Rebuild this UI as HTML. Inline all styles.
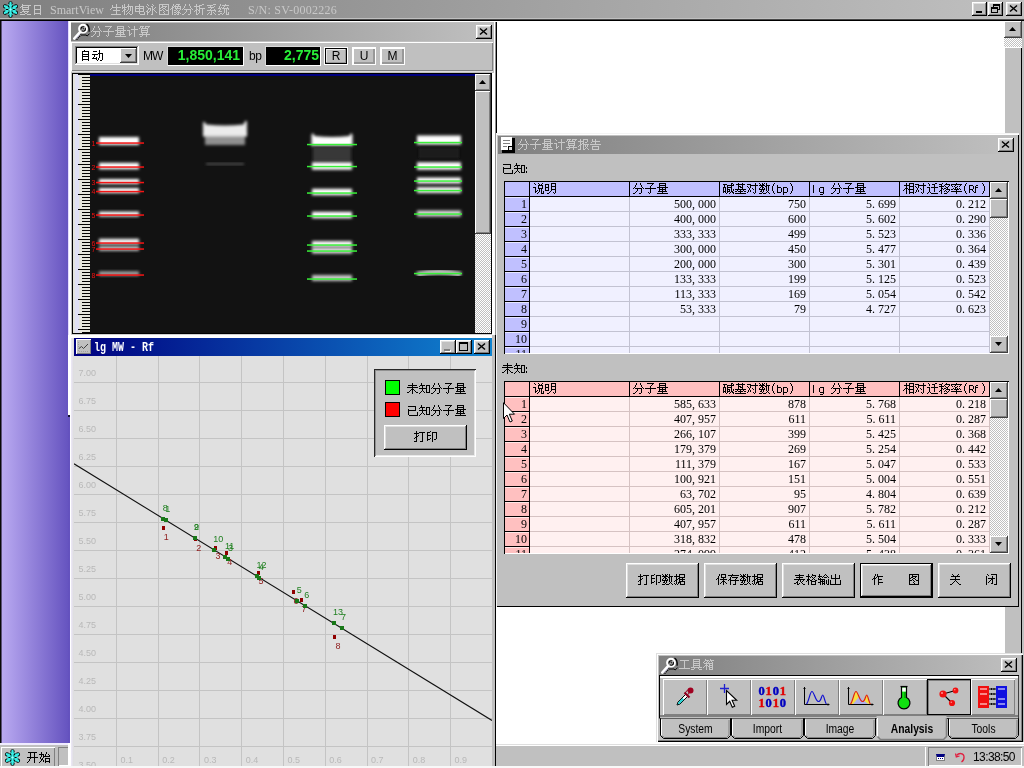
<!DOCTYPE html><html lang="zh"><head><meta charset="utf-8"><title>SmartView</title><style>
*{box-sizing:border-box;margin:0;padding:0}
html,body{width:1024px;height:768px;overflow:hidden;background:#fff;font-family:"Liberation Sans",sans-serif}
body{font-family:"Liberation Sans",sans-serif;font-size:11px;color:#000;position:relative}
#r{will-change:transform;position:absolute;left:0;top:0;width:1024px;height:768px;overflow:hidden;background:#fff}
.a{position:absolute}
svg.bt{shape-rendering:crispEdges;overflow:visible;display:block}
.gray{background:#c0c0c0}
.rb{background:#c0c0c0;box-shadow:inset -1px -1px #000,inset 1px 1px #fff,inset -2px -2px #808080,inset 2px 2px #dfdfdf}
.rb1{background:#c0c0c0;box-shadow:inset -1px -1px #404040,inset 1px 1px #fff,inset -2px -2px #808080}
.sk{box-shadow:inset -1px -1px #fff,inset 1px 1px #808080,inset -2px -2px #dfdfdf,inset 2px 2px #000}
.dith{background:conic-gradient(#fff 25%,#c0c0c0 0 50%,#fff 0 75%,#c0c0c0 0) 0 0/2px 2px}
.tb{background:linear-gradient(90deg,#808080,#c0c0c0)}
.tba{background:linear-gradient(90deg,#000080,#1084d0)}
.ser{font-family:"Liberation Serif",serif;font-size:12px}
i{font-style:normal;display:inline-block;width:6px;text-align:left}
.cell{position:absolute;height:15px;line-height:14px;text-align:right;padding-right:3px;font-family:"Liberation Serif",serif;font-size:12px;white-space:nowrap}
.lbl{position:absolute;font-size:9px;line-height:9px;white-space:nowrap}
.btn{position:absolute;background:#c0c0c0;box-shadow:inset -1px -1px #000,inset 1px 1px #fff,inset -2px -2px #808080,inset 2px 2px #dfdfdf}
</style></head><body><div id="r"><svg width="0" height="0" style="position:absolute"><defs><path id="g28" d="M3 2h1v1h-1zM2 3h1v1h-1zM2 4h1v1h-1zM1 5h1v1h-1zM1 6h1v1h-1zM1 7h1v1h-1zM1 8h1v1h-1zM1 9h1v1h-1zM2 10h1v1h-1zM2 11h1v1h-1zM3 12h1v1h-1z"/><path id="g29" d="M1 2h1v1h-1zM2 3h1v1h-1zM2 4h1v1h-1zM3 5h1v1h-1zM3 6h1v1h-1zM3 7h1v1h-1zM3 8h1v1h-1zM3 9h1v1h-1zM2 10h1v1h-1zM2 11h1v1h-1zM1 12h1v1h-1z"/><path id="g3a" d="M0 6h1v1h-1zM0 7h1v1h-1zM0 10h1v1h-1zM0 11h1v1h-1z"/><path id="g52" d="M0 4h4v1h-4zM0 5h1v1h-1zM4 5h1v1h-1zM0 6h1v1h-1zM4 6h1v1h-1zM0 7h1v1h-1zM4 7h1v1h-1zM0 8h4v1h-4zM0 9h1v1h-1zM3 9h1v1h-1zM0 10h1v1h-1zM4 10h1v1h-1zM0 11h1v1h-1zM5 11h1v1h-1z"/><path id="g62" d="M0 4h1v1h-1zM0 5h1v1h-1zM0 6h4v1h-4zM0 7h1v1h-1zM4 7h1v1h-1zM0 8h1v1h-1zM4 8h1v1h-1zM0 9h1v1h-1zM4 9h1v1h-1zM0 10h1v1h-1zM4 10h1v1h-1zM0 11h4v1h-4z"/><path id="g66" d="M1 4h2v1h-2zM0 5h1v1h-1zM0 6h3v1h-3zM0 7h1v1h-1zM0 8h1v1h-1zM0 9h1v1h-1zM0 10h1v1h-1zM0 11h1v1h-1z"/><path id="g67" d="M1 6h4v1h-4zM0 7h1v1h-1zM4 7h1v1h-1zM0 8h1v1h-1zM4 8h1v1h-1zM0 9h1v1h-1zM4 9h1v1h-1zM0 10h1v1h-1zM4 10h1v1h-1zM1 11h4v1h-4zM4 12h1v1h-1zM1 13h3v1h-3z"/><path id="g6c" d="M0 4h1v1h-1zM0 5h1v1h-1zM0 6h1v1h-1zM0 7h1v1h-1zM0 8h1v1h-1zM0 9h1v1h-1zM0 10h1v1h-1zM0 11h1v1h-1z"/><path id="g70" d="M0 6h4v1h-4zM0 7h1v1h-1zM4 7h1v1h-1zM0 8h1v1h-1zM4 8h1v1h-1zM0 9h1v1h-1zM4 9h1v1h-1zM0 10h1v1h-1zM4 10h1v1h-1zM0 11h4v1h-4zM0 12h1v1h-1zM0 13h1v1h-1z"/><path id="g4f5c" d="M3 2h1v1h-1zM5 2h1v1h-1zM3 3h1v1h-1zM5 3h1v1h-1zM2 4h1v1h-1zM5 4h6v1h-6zM2 5h1v1h-1zM4 5h1v1h-1zM6 5h1v1h-1zM1 6h3v1h-3zM6 6h1v1h-1zM0 7h1v1h-1zM2 7h1v1h-1zM6 7h4v1h-4zM2 8h1v1h-1zM6 8h1v1h-1zM2 9h1v1h-1zM6 9h1v1h-1zM2 10h1v1h-1zM6 10h5v1h-5zM2 11h1v1h-1zM6 11h1v1h-1zM2 12h1v1h-1zM6 12h1v1h-1z"/><path id="g4fdd" d="M3 2h1v1h-1zM5 2h5v1h-5zM3 3h1v1h-1zM5 3h1v1h-1zM9 3h1v1h-1zM2 4h1v1h-1zM5 4h1v1h-1zM9 4h1v1h-1zM2 5h1v1h-1zM5 5h5v1h-5zM1 6h2v1h-2zM7 6h1v1h-1zM0 7h1v1h-1zM2 7h1v1h-1zM4 7h7v1h-7zM2 8h1v1h-1zM7 8h1v1h-1zM2 9h1v1h-1zM6 9h3v1h-3zM2 10h1v1h-1zM5 10h1v1h-1zM7 10h1v1h-1zM9 10h1v1h-1zM2 11h1v1h-1zM4 11h1v1h-1zM7 11h1v1h-1zM10 11h1v1h-1zM2 12h1v1h-1zM7 12h1v1h-1z"/><path id="g50cf" d="M3 2h1v1h-1zM6 2h4v1h-4zM3 3h1v1h-1zM5 3h1v1h-1zM8 3h1v1h-1zM2 4h1v1h-1zM4 4h7v1h-7zM2 5h2v1h-2zM5 5h1v1h-1zM7 5h1v1h-1zM10 5h1v1h-1zM1 6h2v1h-2zM5 6h6v1h-6zM0 7h1v1h-1zM2 7h1v1h-1zM6 7h1v1h-1zM10 7h1v1h-1zM2 8h1v1h-1zM4 8h2v1h-2zM7 8h1v1h-1zM9 8h1v1h-1zM2 9h1v1h-1zM6 9h1v1h-1zM8 9h1v1h-1zM2 10h1v1h-1zM4 10h2v1h-2zM7 10h3v1h-3zM2 11h1v1h-1zM6 11h1v1h-1zM8 11h1v1h-1zM10 11h1v1h-1zM2 12h1v1h-1zM4 12h2v1h-2zM7 12h2v1h-2z"/><path id="g5173" d="M2 2h1v1h-1zM8 2h1v1h-1zM3 3h1v1h-1zM7 3h1v1h-1zM1 4h9v1h-9zM5 5h1v1h-1zM5 6h1v1h-1zM0 7h10v1h-10zM5 8h1v1h-1zM4 9h1v1h-1zM6 9h1v1h-1zM3 10h1v1h-1zM7 10h1v1h-1zM2 11h1v1h-1zM8 11h1v1h-1zM0 12h2v1h-2zM9 12h2v1h-2z"/><path id="g5177" d="M2 2h7v1h-7zM2 3h1v1h-1zM8 3h1v1h-1zM2 4h7v1h-7zM2 5h1v1h-1zM8 5h1v1h-1zM2 6h7v1h-7zM2 7h1v1h-1zM8 7h1v1h-1zM2 8h7v1h-7zM2 9h1v1h-1zM8 9h1v1h-1zM0 10h11v1h-11zM3 11h1v1h-1zM7 11h1v1h-1zM0 12h3v1h-3zM8 12h3v1h-3z"/><path id="g51fa" d="M5 2h1v1h-1zM1 3h1v1h-1zM5 3h1v1h-1zM9 3h1v1h-1zM1 4h1v1h-1zM5 4h1v1h-1zM9 4h1v1h-1zM1 5h1v1h-1zM5 5h1v1h-1zM9 5h1v1h-1zM1 6h9v1h-9zM5 7h1v1h-1zM0 8h1v1h-1zM5 8h1v1h-1zM10 8h1v1h-1zM0 9h1v1h-1zM5 9h1v1h-1zM10 9h1v1h-1zM0 10h1v1h-1zM5 10h1v1h-1zM10 10h1v1h-1zM0 11h1v1h-1zM5 11h1v1h-1zM10 11h1v1h-1zM0 12h11v1h-11z"/><path id="g5206" d="M3 2h1v1h-1zM7 2h1v1h-1zM3 3h1v1h-1zM7 3h1v1h-1zM2 4h1v1h-1zM8 4h1v1h-1zM2 5h1v1h-1zM8 5h1v1h-1zM1 6h1v1h-1zM9 6h1v1h-1zM0 7h1v1h-1zM2 7h7v1h-7zM10 7h1v1h-1zM4 8h1v1h-1zM8 8h1v1h-1zM4 9h1v1h-1zM8 9h1v1h-1zM3 10h1v1h-1zM8 10h1v1h-1zM2 11h1v1h-1zM8 11h1v1h-1zM0 12h2v1h-2zM6 12h2v1h-2z"/><path id="g52a8" d="M7 2h1v1h-1zM1 3h4v1h-4zM7 3h1v1h-1zM7 4h1v1h-1zM6 5h5v1h-5zM0 6h6v1h-6zM7 6h1v1h-1zM10 6h1v1h-1zM2 7h1v1h-1zM7 7h1v1h-1zM10 7h1v1h-1zM2 8h1v1h-1zM7 8h1v1h-1zM10 8h1v1h-1zM1 9h1v1h-1zM4 9h1v1h-1zM7 9h1v1h-1zM10 9h1v1h-1zM0 10h5v1h-5zM6 10h1v1h-1zM10 10h1v1h-1zM4 11h1v1h-1zM6 11h1v1h-1zM10 11h1v1h-1zM5 12h1v1h-1zM8 12h2v1h-2z"/><path id="g5370" d="M4 2h1v1h-1zM1 3h3v1h-3zM6 3h5v1h-5zM1 4h1v1h-1zM6 4h1v1h-1zM10 4h1v1h-1zM1 5h1v1h-1zM6 5h1v1h-1zM10 5h1v1h-1zM1 6h4v1h-4zM6 6h1v1h-1zM10 6h1v1h-1zM1 7h1v1h-1zM6 7h1v1h-1zM10 7h1v1h-1zM1 8h1v1h-1zM6 8h1v1h-1zM10 8h1v1h-1zM1 9h1v1h-1zM4 9h1v1h-1zM6 9h1v1h-1zM10 9h1v1h-1zM1 10h3v1h-3zM6 10h1v1h-1zM8 10h2v1h-2zM1 11h1v1h-1zM6 11h1v1h-1zM6 12h1v1h-1z"/><path id="g544a" d="M2 2h1v1h-1zM5 2h1v1h-1zM2 3h1v1h-1zM5 3h1v1h-1zM2 4h8v1h-8zM1 5h1v1h-1zM5 5h1v1h-1zM5 6h1v1h-1zM0 7h11v1h-11zM2 9h7v1h-7zM2 10h1v1h-1zM8 10h1v1h-1zM2 11h1v1h-1zM8 11h1v1h-1zM2 12h7v1h-7z"/><path id="g56fe" d="M1 2h10v1h-10zM1 3h1v1h-1zM4 3h1v1h-1zM10 3h1v1h-1zM1 4h1v1h-1zM4 4h5v1h-5zM10 4h1v1h-1zM1 5h1v1h-1zM3 5h2v1h-2zM7 5h1v1h-1zM10 5h1v1h-1zM1 6h2v1h-2zM5 6h2v1h-2zM10 6h1v1h-1zM1 7h1v1h-1zM4 7h1v1h-1zM7 7h1v1h-1zM10 7h1v1h-1zM1 8h3v1h-3zM5 8h1v1h-1zM8 8h3v1h-3zM1 9h1v1h-1zM6 9h1v1h-1zM10 9h1v1h-1zM1 10h1v1h-1zM5 10h1v1h-1zM10 10h1v1h-1zM1 11h1v1h-1zM6 11h1v1h-1zM10 11h1v1h-1zM1 12h10v1h-10z"/><path id="g57fa" d="M3 2h1v1h-1zM7 2h1v1h-1zM1 3h9v1h-9zM3 4h1v1h-1zM7 4h1v1h-1zM3 5h3v1h-3zM7 5h1v1h-1zM3 6h1v1h-1zM5 6h3v1h-3zM3 7h1v1h-1zM7 7h1v1h-1zM0 8h11v1h-11zM2 9h1v1h-1zM5 9h1v1h-1zM8 9h1v1h-1zM0 10h2v1h-2zM3 10h5v1h-5zM9 10h2v1h-2zM5 11h1v1h-1zM0 12h11v1h-11z"/><path id="g590d" d="M2 2h1v1h-1zM2 3h9v1h-9zM1 4h2v1h-2zM8 4h1v1h-1zM0 5h1v1h-1zM2 5h7v1h-7zM2 6h1v1h-1zM8 6h1v1h-1zM2 7h7v1h-7zM3 8h1v1h-1zM2 9h7v1h-7zM0 10h2v1h-2zM4 10h1v1h-1zM7 10h1v1h-1zM5 11h2v1h-2zM0 12h5v1h-5zM7 12h4v1h-4z"/><path id="g59cb" d="M2 2h1v1h-1zM7 2h1v1h-1zM2 3h1v1h-1zM7 3h1v1h-1zM0 4h5v1h-5zM6 4h1v1h-1zM9 4h1v1h-1zM2 5h1v1h-1zM4 5h1v1h-1zM6 5h1v1h-1zM10 5h1v1h-1zM2 6h1v1h-1zM4 6h7v1h-7zM1 7h1v1h-1zM4 7h1v1h-1zM1 8h1v1h-1zM3 8h1v1h-1zM6 8h5v1h-5zM2 9h2v1h-2zM6 9h1v1h-1zM10 9h1v1h-1zM2 10h1v1h-1zM4 10h1v1h-1zM6 10h1v1h-1zM10 10h1v1h-1zM1 11h1v1h-1zM4 11h1v1h-1zM6 11h5v1h-5zM0 12h1v1h-1zM6 12h1v1h-1zM10 12h1v1h-1z"/><path id="g5b50" d="M2 2h7v1h-7zM7 3h1v1h-1zM6 4h1v1h-1zM5 5h1v1h-1zM5 6h1v1h-1zM0 7h11v1h-11zM5 8h1v1h-1zM5 9h1v1h-1zM5 10h1v1h-1zM3 11h1v1h-1zM5 11h1v1h-1zM4 12h1v1h-1z"/><path id="g5b58" d="M4 2h1v1h-1zM0 3h11v1h-11zM3 4h1v1h-1zM2 5h1v1h-1zM4 5h6v1h-6zM2 6h1v1h-1zM8 6h1v1h-1zM1 7h2v1h-2zM7 7h1v1h-1zM0 8h1v1h-1zM2 8h9v1h-9zM2 9h1v1h-1zM7 9h1v1h-1zM2 10h1v1h-1zM7 10h1v1h-1zM2 11h1v1h-1zM7 11h1v1h-1zM2 12h1v1h-1zM5 12h3v1h-3z"/><path id="g5bf9" d="M8 2h1v1h-1zM0 3h4v1h-4zM8 3h1v1h-1zM3 4h8v1h-8zM0 5h1v1h-1zM3 5h1v1h-1zM8 5h1v1h-1zM1 6h1v1h-1zM3 6h1v1h-1zM8 6h1v1h-1zM2 7h1v1h-1zM5 7h1v1h-1zM8 7h1v1h-1zM2 8h1v1h-1zM6 8h1v1h-1zM8 8h1v1h-1zM1 9h1v1h-1zM3 9h1v1h-1zM8 9h1v1h-1zM1 10h1v1h-1zM3 10h1v1h-1zM8 10h1v1h-1zM0 11h1v1h-1zM6 11h1v1h-1zM8 11h1v1h-1zM7 12h1v1h-1z"/><path id="g5de5" d="M1 3h9v1h-9zM5 4h1v1h-1zM5 5h1v1h-1zM5 6h1v1h-1zM5 7h1v1h-1zM5 8h1v1h-1zM5 9h1v1h-1zM5 10h1v1h-1zM0 11h11v1h-11z"/><path id="g5df2" d="M1 3h8v1h-8zM8 4h1v1h-1zM8 5h1v1h-1zM1 6h1v1h-1zM8 6h1v1h-1zM1 7h8v1h-8zM1 8h1v1h-1zM1 9h1v1h-1zM10 9h1v1h-1zM1 10h1v1h-1zM10 10h1v1h-1zM1 11h1v1h-1zM10 11h1v1h-1zM2 12h9v1h-9z"/><path id="g5f00" d="M1 2h9v1h-9zM3 3h1v1h-1zM7 3h1v1h-1zM3 4h1v1h-1zM7 4h1v1h-1zM3 5h1v1h-1zM7 5h1v1h-1zM3 6h1v1h-1zM7 6h1v1h-1zM0 7h11v1h-11zM3 8h1v1h-1zM7 8h1v1h-1zM2 9h1v1h-1zM7 9h1v1h-1zM2 10h1v1h-1zM7 10h1v1h-1zM1 11h1v1h-1zM7 11h1v1h-1zM0 12h1v1h-1zM7 12h1v1h-1z"/><path id="g6253" d="M2 2h1v1h-1zM2 3h1v1h-1zM5 3h6v1h-6zM0 4h5v1h-5zM8 4h1v1h-1zM2 5h1v1h-1zM8 5h1v1h-1zM2 6h1v1h-1zM4 6h1v1h-1zM8 6h1v1h-1zM2 7h2v1h-2zM8 7h1v1h-1zM1 8h2v1h-2zM8 8h1v1h-1zM0 9h1v1h-1zM2 9h1v1h-1zM8 9h1v1h-1zM2 10h1v1h-1zM8 10h1v1h-1zM2 11h1v1h-1zM8 11h1v1h-1zM0 12h3v1h-3zM6 12h3v1h-3z"/><path id="g62a5" d="M2 2h1v1h-1zM5 2h5v1h-5zM2 3h1v1h-1zM5 3h1v1h-1zM9 3h1v1h-1zM0 4h6v1h-6zM9 4h1v1h-1zM2 5h1v1h-1zM5 5h1v1h-1zM7 5h2v1h-2zM2 6h1v1h-1zM4 6h2v1h-2zM2 7h2v1h-2zM5 7h6v1h-6zM1 8h2v1h-2zM5 8h1v1h-1zM7 8h1v1h-1zM9 8h1v1h-1zM0 9h1v1h-1zM2 9h1v1h-1zM5 9h1v1h-1zM7 9h1v1h-1zM9 9h1v1h-1zM2 10h1v1h-1zM5 10h1v1h-1zM8 10h1v1h-1zM2 11h1v1h-1zM5 11h1v1h-1zM7 11h1v1h-1zM9 11h1v1h-1zM0 12h3v1h-3zM5 12h2v1h-2zM10 12h1v1h-1z"/><path id="g636e" d="M2 2h1v1h-1zM5 2h6v1h-6zM2 3h1v1h-1zM5 3h1v1h-1zM10 3h1v1h-1zM0 4h6v1h-6zM10 4h1v1h-1zM2 5h1v1h-1zM5 5h6v1h-6zM2 6h1v1h-1zM4 6h2v1h-2zM8 6h1v1h-1zM2 7h2v1h-2zM5 7h6v1h-6zM1 8h2v1h-2zM5 8h1v1h-1zM8 8h1v1h-1zM0 9h1v1h-1zM2 9h1v1h-1zM5 9h6v1h-6zM2 10h1v1h-1zM4 10h3v1h-3zM10 10h1v1h-1zM0 11h1v1h-1zM2 11h1v1h-1zM4 11h1v1h-1zM6 11h1v1h-1zM10 11h1v1h-1zM1 12h1v1h-1zM3 12h1v1h-1zM6 12h5v1h-5z"/><path id="g6570" d="M0 2h1v1h-1zM3 2h1v1h-1zM5 2h1v1h-1zM7 2h1v1h-1zM1 3h1v1h-1zM3 3h2v1h-2zM7 3h1v1h-1zM0 4h6v1h-6zM7 4h4v1h-4zM2 5h2v1h-2zM6 5h2v1h-2zM9 5h1v1h-1zM1 6h1v1h-1zM3 6h2v1h-2zM7 6h1v1h-1zM9 6h1v1h-1zM0 7h1v1h-1zM3 7h1v1h-1zM5 7h1v1h-1zM7 7h1v1h-1zM9 7h1v1h-1zM0 8h6v1h-6zM7 8h1v1h-1zM9 8h1v1h-1zM2 9h1v1h-1zM4 9h1v1h-1zM7 9h1v1h-1zM9 9h1v1h-1zM1 10h2v1h-2zM4 10h1v1h-1zM8 10h1v1h-1zM3 11h1v1h-1zM7 11h1v1h-1zM9 11h1v1h-1zM0 12h3v1h-3zM4 12h3v1h-3zM10 12h1v1h-1z"/><path id="g65e5" d="M2 3h7v1h-7zM2 4h1v1h-1zM8 4h1v1h-1zM2 5h1v1h-1zM8 5h1v1h-1zM2 6h1v1h-1zM8 6h1v1h-1zM2 7h7v1h-7zM2 8h1v1h-1zM8 8h1v1h-1zM2 9h1v1h-1zM8 9h1v1h-1zM2 10h1v1h-1zM8 10h1v1h-1zM2 11h7v1h-7zM2 12h1v1h-1zM8 12h1v1h-1z"/><path id="g660e" d="M6 2h5v1h-5zM0 3h4v1h-4zM6 3h1v1h-1zM10 3h1v1h-1zM0 4h1v1h-1zM3 4h1v1h-1zM6 4h1v1h-1zM10 4h1v1h-1zM0 5h1v1h-1zM3 5h1v1h-1zM6 5h5v1h-5zM0 6h4v1h-4zM6 6h1v1h-1zM10 6h1v1h-1zM0 7h1v1h-1zM3 7h1v1h-1zM6 7h1v1h-1zM10 7h1v1h-1zM0 8h1v1h-1zM3 8h1v1h-1zM6 8h5v1h-5zM0 9h4v1h-4zM6 9h1v1h-1zM10 9h1v1h-1zM5 10h1v1h-1zM10 10h1v1h-1zM4 11h1v1h-1zM8 11h1v1h-1zM10 11h1v1h-1zM2 12h2v1h-2zM9 12h1v1h-1z"/><path id="g672a" d="M5 2h1v1h-1zM5 3h1v1h-1zM1 4h9v1h-9zM5 5h1v1h-1zM0 6h11v1h-11zM5 7h1v1h-1zM4 8h3v1h-3zM3 9h1v1h-1zM5 9h1v1h-1zM7 9h1v1h-1zM2 10h1v1h-1zM5 10h1v1h-1zM8 10h1v1h-1zM0 11h2v1h-2zM5 11h1v1h-1zM9 11h2v1h-2zM5 12h1v1h-1z"/><path id="g6790" d="M2 2h1v1h-1zM8 2h2v1h-2zM2 3h1v1h-1zM5 3h3v1h-3zM0 4h6v1h-6zM2 5h1v1h-1zM5 5h1v1h-1zM2 6h1v1h-1zM5 6h6v1h-6zM2 7h2v1h-2zM5 7h1v1h-1zM8 7h1v1h-1zM1 8h2v1h-2zM4 8h2v1h-2zM8 8h1v1h-1zM0 9h1v1h-1zM2 9h1v1h-1zM5 9h1v1h-1zM8 9h1v1h-1zM2 10h1v1h-1zM5 10h1v1h-1zM8 10h1v1h-1zM2 11h1v1h-1zM4 11h1v1h-1zM8 11h1v1h-1zM2 12h2v1h-2zM8 12h1v1h-1z"/><path id="g683c" d="M2 2h1v1h-1zM6 2h1v1h-1zM2 3h1v1h-1zM6 3h4v1h-4zM0 4h4v1h-4zM5 4h1v1h-1zM9 4h1v1h-1zM2 5h1v1h-1zM4 5h1v1h-1zM6 5h1v1h-1zM8 5h1v1h-1zM2 6h1v1h-1zM7 6h1v1h-1zM1 7h3v1h-3zM6 7h1v1h-1zM8 7h1v1h-1zM1 8h2v1h-2zM4 8h2v1h-2zM9 8h2v1h-2zM0 9h1v1h-1zM2 9h1v1h-1zM5 9h5v1h-5zM2 10h1v1h-1zM5 10h1v1h-1zM9 10h1v1h-1zM2 11h1v1h-1zM5 11h1v1h-1zM9 11h1v1h-1zM2 12h1v1h-1zM5 12h5v1h-5z"/><path id="g6cf3" d="M1 2h1v1h-1zM6 2h1v1h-1zM2 3h1v1h-1zM7 3h1v1h-1zM0 4h1v1h-1zM5 4h2v1h-2zM1 5h1v1h-1zM6 5h1v1h-1zM9 5h1v1h-1zM2 6h3v1h-3zM6 6h1v1h-1zM8 6h1v1h-1zM2 7h1v1h-1zM4 7h1v1h-1zM6 7h2v1h-2zM1 8h1v1h-1zM4 8h1v1h-1zM6 8h1v1h-1zM8 8h1v1h-1zM0 9h2v1h-2zM3 9h1v1h-1zM6 9h1v1h-1zM9 9h1v1h-1zM1 10h2v1h-2zM6 10h1v1h-1zM10 10h1v1h-1zM1 11h1v1h-1zM6 11h1v1h-1zM1 12h1v1h-1zM5 12h2v1h-2z"/><path id="g7269" d="M2 2h1v1h-1zM6 2h1v1h-1zM0 3h1v1h-1zM2 3h1v1h-1zM6 3h1v1h-1zM0 4h1v1h-1zM2 4h1v1h-1zM5 4h6v1h-6zM0 5h5v1h-5zM6 5h1v1h-1zM8 5h1v1h-1zM10 5h1v1h-1zM0 6h1v1h-1zM2 6h1v1h-1zM6 6h1v1h-1zM8 6h1v1h-1zM10 6h1v1h-1zM2 7h2v1h-2zM6 7h1v1h-1zM8 7h1v1h-1zM10 7h1v1h-1zM1 8h2v1h-2zM5 8h1v1h-1zM8 8h1v1h-1zM10 8h1v1h-1zM0 9h1v1h-1zM2 9h1v1h-1zM4 9h1v1h-1zM7 9h1v1h-1zM10 9h1v1h-1zM2 10h1v1h-1zM6 10h1v1h-1zM10 10h1v1h-1zM2 11h1v1h-1zM5 11h1v1h-1zM7 11h1v1h-1zM10 11h1v1h-1zM2 12h1v1h-1zM4 12h1v1h-1zM8 12h2v1h-2z"/><path id="g7387" d="M5 2h1v1h-1zM0 3h11v1h-11zM0 4h1v1h-1zM4 4h1v1h-1zM9 4h1v1h-1zM1 5h1v1h-1zM3 5h1v1h-1zM6 5h1v1h-1zM8 5h1v1h-1zM4 6h2v1h-2zM2 7h1v1h-1zM4 7h1v1h-1zM6 7h1v1h-1zM8 7h1v1h-1zM0 8h2v1h-2zM3 8h5v1h-5zM9 8h1v1h-1zM5 9h1v1h-1zM0 10h11v1h-11zM5 11h1v1h-1zM5 12h1v1h-1z"/><path id="g751f" d="M6 2h1v1h-1zM2 3h1v1h-1zM6 3h1v1h-1zM2 4h1v1h-1zM6 4h1v1h-1zM2 5h9v1h-9zM1 6h1v1h-1zM6 6h1v1h-1zM0 7h1v1h-1zM6 7h1v1h-1zM3 8h7v1h-7zM6 9h1v1h-1zM6 10h1v1h-1zM6 11h1v1h-1zM1 12h10v1h-10z"/><path id="g7535" d="M5 2h1v1h-1zM5 3h1v1h-1zM1 4h9v1h-9zM1 5h1v1h-1zM5 5h1v1h-1zM9 5h1v1h-1zM1 6h9v1h-9zM1 7h1v1h-1zM5 7h1v1h-1zM9 7h1v1h-1zM1 8h1v1h-1zM5 8h1v1h-1zM9 8h1v1h-1zM1 9h9v1h-9zM5 10h1v1h-1zM10 10h1v1h-1zM5 11h1v1h-1zM10 11h1v1h-1zM6 12h5v1h-5z"/><path id="g76f8" d="M3 2h1v1h-1zM6 2h5v1h-5zM3 3h1v1h-1zM6 3h1v1h-1zM10 3h1v1h-1zM1 4h6v1h-6zM10 4h1v1h-1zM3 5h1v1h-1zM6 5h5v1h-5zM3 6h1v1h-1zM6 6h1v1h-1zM10 6h1v1h-1zM2 7h3v1h-3zM6 7h1v1h-1zM10 7h1v1h-1zM1 8h1v1h-1zM3 8h1v1h-1zM5 8h6v1h-6zM0 9h1v1h-1zM3 9h1v1h-1zM6 9h1v1h-1zM10 9h1v1h-1zM3 10h1v1h-1zM6 10h1v1h-1zM10 10h1v1h-1zM3 11h1v1h-1zM6 11h5v1h-5zM3 12h1v1h-1zM6 12h1v1h-1zM10 12h1v1h-1z"/><path id="g77e5" d="M2 2h1v1h-1zM2 3h1v1h-1zM1 4h5v1h-5zM7 4h4v1h-4zM0 5h1v1h-1zM3 5h1v1h-1zM7 5h1v1h-1zM10 5h1v1h-1zM3 6h1v1h-1zM7 6h1v1h-1zM10 6h1v1h-1zM0 7h8v1h-8zM10 7h1v1h-1zM3 8h1v1h-1zM7 8h1v1h-1zM10 8h1v1h-1zM3 9h1v1h-1zM7 9h1v1h-1zM10 9h1v1h-1zM2 10h1v1h-1zM4 10h1v1h-1zM7 10h1v1h-1zM10 10h1v1h-1zM1 11h1v1h-1zM5 11h1v1h-1zM7 11h4v1h-4zM0 12h1v1h-1z"/><path id="g78b1" d="M8 2h2v1h-2zM0 3h4v1h-4zM8 3h1v1h-1zM10 3h1v1h-1zM1 4h1v1h-1zM4 4h7v1h-7zM1 5h1v1h-1zM4 5h1v1h-1zM8 5h1v1h-1zM0 6h3v1h-3zM4 6h5v1h-5zM0 7h1v1h-1zM2 7h1v1h-1zM4 7h1v1h-1zM8 7h1v1h-1zM0 8h1v1h-1zM2 8h1v1h-1zM4 8h3v1h-3zM8 8h1v1h-1zM10 8h1v1h-1zM0 9h1v1h-1zM2 9h1v1h-1zM4 9h1v1h-1zM6 9h1v1h-1zM8 9h1v1h-1zM10 9h1v1h-1zM0 10h3v1h-3zM4 10h3v1h-3zM8 10h2v1h-2zM0 11h1v1h-1zM2 11h1v1h-1zM4 11h1v1h-1zM7 11h1v1h-1zM9 11h2v1h-2zM3 12h1v1h-1zM6 12h1v1h-1zM10 12h1v1h-1z"/><path id="g79fb" d="M3 2h1v1h-1zM7 2h1v1h-1zM0 3h3v1h-3zM6 3h5v1h-5zM2 4h1v1h-1zM5 4h1v1h-1zM10 4h1v1h-1zM0 5h5v1h-5zM6 5h1v1h-1zM9 5h1v1h-1zM2 6h1v1h-1zM7 6h2v1h-2zM2 7h2v1h-2zM5 7h2v1h-2zM8 7h1v1h-1zM2 8h1v1h-1zM4 8h1v1h-1zM7 8h4v1h-4zM1 9h2v1h-2zM6 9h1v1h-1zM10 9h1v1h-1zM0 10h1v1h-1zM2 10h1v1h-1zM5 10h1v1h-1zM7 10h1v1h-1zM9 10h1v1h-1zM2 11h1v1h-1zM8 11h1v1h-1zM2 12h1v1h-1zM5 12h3v1h-3z"/><path id="g7b97" d="M1 2h4v1h-4zM6 2h5v1h-5zM1 3h1v1h-1zM3 3h1v1h-1zM6 3h1v1h-1zM9 3h1v1h-1zM0 4h1v1h-1zM2 4h7v1h-7zM2 5h1v1h-1zM8 5h1v1h-1zM2 6h7v1h-7zM2 7h1v1h-1zM8 7h1v1h-1zM2 8h7v1h-7zM3 9h1v1h-1zM7 9h1v1h-1zM0 10h11v1h-11zM3 11h1v1h-1zM7 11h1v1h-1zM1 12h2v1h-2zM7 12h1v1h-1z"/><path id="g7bb1" d="M2 2h1v1h-1zM7 2h1v1h-1zM2 3h4v1h-4zM7 3h4v1h-4zM1 4h1v1h-1zM4 4h1v1h-1zM6 4h1v1h-1zM8 4h1v1h-1zM0 5h1v1h-1zM3 5h1v1h-1zM5 5h1v1h-1zM9 5h1v1h-1zM1 6h9v1h-9zM3 7h1v1h-1zM6 7h1v1h-1zM9 7h1v1h-1zM2 8h3v1h-3zM6 8h4v1h-4zM1 9h1v1h-1zM3 9h1v1h-1zM5 9h2v1h-2zM9 9h1v1h-1zM0 10h1v1h-1zM3 10h1v1h-1zM6 10h4v1h-4zM3 11h1v1h-1zM6 11h1v1h-1zM9 11h1v1h-1zM3 12h1v1h-1zM6 12h4v1h-4z"/><path id="g7cfb" d="M7 2h3v1h-3zM1 3h6v1h-6zM4 4h1v1h-1zM8 4h1v1h-1zM2 5h6v1h-6zM5 6h1v1h-1zM4 7h1v1h-1zM8 7h1v1h-1zM1 8h9v1h-9zM5 9h1v1h-1zM9 9h1v1h-1zM3 10h1v1h-1zM5 10h1v1h-1zM7 10h1v1h-1zM2 11h1v1h-1zM5 11h1v1h-1zM8 11h1v1h-1zM1 12h1v1h-1zM4 12h2v1h-2zM9 12h1v1h-1z"/><path id="g7edf" d="M2 2h1v1h-1zM7 2h1v1h-1zM2 3h1v1h-1zM4 3h7v1h-7zM1 4h1v1h-1zM6 4h1v1h-1zM1 5h1v1h-1zM3 5h1v1h-1zM5 5h1v1h-1zM9 5h1v1h-1zM0 6h3v1h-3zM4 6h7v1h-7zM2 7h1v1h-1zM6 7h1v1h-1zM8 7h1v1h-1zM10 7h1v1h-1zM1 8h1v1h-1zM6 8h1v1h-1zM8 8h1v1h-1zM0 9h4v1h-4zM6 9h1v1h-1zM8 9h1v1h-1zM6 10h1v1h-1zM8 10h1v1h-1zM10 10h1v1h-1zM2 11h2v1h-2zM5 11h1v1h-1zM8 11h1v1h-1zM10 11h1v1h-1zM0 12h2v1h-2zM4 12h1v1h-1zM8 12h3v1h-3z"/><path id="g81ea" d="M4 2h1v1h-1zM2 3h7v1h-7zM2 4h1v1h-1zM8 4h1v1h-1zM2 5h1v1h-1zM8 5h1v1h-1zM2 6h7v1h-7zM2 7h1v1h-1zM8 7h1v1h-1zM2 8h7v1h-7zM2 9h1v1h-1zM8 9h1v1h-1zM2 10h1v1h-1zM8 10h1v1h-1zM2 11h7v1h-7zM2 12h1v1h-1zM8 12h1v1h-1z"/><path id="g8868" d="M5 2h1v1h-1zM1 3h9v1h-9zM5 4h1v1h-1zM2 5h7v1h-7zM5 6h1v1h-1zM0 7h11v1h-11zM4 8h1v1h-1zM6 8h1v1h-1zM9 8h1v1h-1zM3 9h1v1h-1zM6 9h1v1h-1zM8 9h1v1h-1zM2 10h2v1h-2zM7 10h1v1h-1zM0 11h2v1h-2zM3 11h1v1h-1zM5 11h1v1h-1zM8 11h1v1h-1zM3 12h2v1h-2zM9 12h2v1h-2z"/><path id="g8ba1" d="M1 2h1v1h-1zM7 2h1v1h-1zM2 3h1v1h-1zM7 3h1v1h-1zM7 4h1v1h-1zM4 5h7v1h-7zM0 6h3v1h-3zM7 6h1v1h-1zM2 7h1v1h-1zM7 7h1v1h-1zM2 8h1v1h-1zM7 8h1v1h-1zM2 9h1v1h-1zM4 9h1v1h-1zM7 9h1v1h-1zM2 10h2v1h-2zM7 10h1v1h-1zM2 11h1v1h-1zM7 11h1v1h-1zM7 12h1v1h-1z"/><path id="g8bf4" d="M1 2h1v1h-1zM5 2h1v1h-1zM9 2h1v1h-1zM2 3h1v1h-1zM6 3h1v1h-1zM8 3h1v1h-1zM5 4h5v1h-5zM5 5h1v1h-1zM9 5h1v1h-1zM0 6h3v1h-3zM5 6h1v1h-1zM9 6h1v1h-1zM2 7h1v1h-1zM5 7h5v1h-5zM2 8h1v1h-1zM6 8h1v1h-1zM8 8h1v1h-1zM2 9h1v1h-1zM4 9h1v1h-1zM6 9h1v1h-1zM8 9h1v1h-1zM2 10h2v1h-2zM6 10h1v1h-1zM8 10h1v1h-1zM10 10h1v1h-1zM2 11h1v1h-1zM5 11h1v1h-1zM8 11h1v1h-1zM10 11h1v1h-1zM4 12h1v1h-1zM8 12h3v1h-3z"/><path id="g8f93" d="M1 2h1v1h-1zM7 2h1v1h-1zM1 3h1v1h-1zM6 3h1v1h-1zM8 3h1v1h-1zM0 4h4v1h-4zM5 4h1v1h-1zM9 4h1v1h-1zM1 5h1v1h-1zM4 5h1v1h-1zM6 5h3v1h-3zM10 5h1v1h-1zM0 6h1v1h-1zM2 6h1v1h-1zM0 7h7v1h-7zM10 7h1v1h-1zM2 8h1v1h-1zM4 8h1v1h-1zM6 8h1v1h-1zM8 8h1v1h-1zM10 8h1v1h-1zM2 9h5v1h-5zM8 9h1v1h-1zM10 9h1v1h-1zM0 10h3v1h-3zM4 10h1v1h-1zM6 10h1v1h-1zM8 10h1v1h-1zM10 10h1v1h-1zM2 11h1v1h-1zM4 11h3v1h-3zM8 11h1v1h-1zM10 11h1v1h-1zM2 12h1v1h-1zM4 12h1v1h-1zM6 12h1v1h-1zM9 12h2v1h-2z"/><path id="g8fc1" d="M1 2h1v1h-1zM8 2h2v1h-2zM2 3h1v1h-1zM5 3h3v1h-3zM2 4h1v1h-1zM7 4h1v1h-1zM7 5h1v1h-1zM0 6h3v1h-3zM4 6h7v1h-7zM2 7h1v1h-1zM7 7h1v1h-1zM2 8h1v1h-1zM7 8h1v1h-1zM2 9h1v1h-1zM7 9h1v1h-1zM2 10h1v1h-1zM7 10h1v1h-1zM1 11h1v1h-1zM3 11h1v1h-1zM0 12h1v1h-1zM4 12h7v1h-7z"/><path id="g91cf" d="M2 2h7v1h-7zM2 3h1v1h-1zM8 3h1v1h-1zM2 4h7v1h-7zM2 5h1v1h-1zM8 5h1v1h-1zM0 6h11v1h-11zM2 7h1v1h-1zM5 7h1v1h-1zM8 7h1v1h-1zM2 8h7v1h-7zM2 9h1v1h-1zM5 9h1v1h-1zM8 9h1v1h-1zM1 10h9v1h-9zM5 11h1v1h-1zM0 12h11v1h-11z"/><path id="g95ed" d="M1 2h1v1h-1zM5 2h6v1h-6zM2 3h1v1h-1zM10 3h1v1h-1zM0 4h1v1h-1zM6 4h1v1h-1zM10 4h1v1h-1zM0 5h1v1h-1zM6 5h1v1h-1zM10 5h1v1h-1zM0 6h1v1h-1zM2 6h7v1h-7zM10 6h1v1h-1zM0 7h1v1h-1zM5 7h2v1h-2zM10 7h1v1h-1zM0 8h1v1h-1zM4 8h1v1h-1zM6 8h1v1h-1zM10 8h1v1h-1zM0 9h1v1h-1zM3 9h1v1h-1zM6 9h1v1h-1zM10 9h1v1h-1zM0 10h1v1h-1zM2 10h1v1h-1zM6 10h1v1h-1zM10 10h1v1h-1zM0 11h1v1h-1zM5 11h2v1h-2zM10 11h1v1h-1zM0 12h1v1h-1zM8 12h3v1h-3z"/></defs></svg><div class="a tb" style="left:0;top:0;width:1024px;height:18px"></div><div class="a" style="left:0;top:18px;width:1024px;height:1px;background:#c0c0c0"></div><div class="a" style="left:0;top:19px;width:1024px;height:2px;background:linear-gradient(#484848 50%,#000 50%)"></div><svg class="a" style="left:1.500px;top:1px" width="17" height="17" viewBox="0 0 17 17"><g stroke="#000" stroke-width="4.200" stroke-linecap="round"><path d="M8.500 2.300v12.400M3.100 5.400l10.800 6.200M3.100 11.600l10.800-6.200"/></g><g stroke="#38f0e8" stroke-width="2.300" stroke-linecap="round"><path d="M8.500 2v13M2.900 5.200l11.200 6.600M2.900 11.800l11.200-6.600"/></g><g stroke="#38f0e8" stroke-width="1.100" fill="none"><path d="M6.300 3.300l2.200 2 2.200-2M6.300 13.700l2.200-2 2.200 2M2.600 8l2.800-.8-.6-2.900M14.400 8l-2.800-.8.600-2.900M2.600 9l2.800.8-.6 2.900M14.400 9l-2.800.8.600 2.900"/></g><path d="M6.500 6.500h1v1h-1zM9.500 6.500h1v1h-1zM6.500 9.500h1v1h-1zM9.500 9.500h1v1h-1zM5 8h1.200v1h-1.200zM10.800 8h1.200v1h-1.200z" fill="#000"/><circle cx="8.500" cy="8.500" r="1.100" fill="#a0fff8"/></svg><svg class="bt" width="24" height="16" viewBox="0 0 24 16" role="img" aria-label="复日" style="fill:#c8c8c8;position:absolute;left:20px;top:2px;"><title>复日</title><use href="#g590d" x="0"/><use href="#g65e5" x="12"/></svg><span class="a" id="t1" style="left:50px;top:3px;color:#c8c8c8;font:12px/14px 'Liberation Serif',serif;white-space:pre">SmartView</span><svg class="bt" width="120" height="16" viewBox="0 0 120 16" role="img" aria-label="生物电泳图像分析系统" style="fill:#c8c8c8;position:absolute;left:110px;top:2px;"><title>生物电泳图像分析系统</title><use href="#g751f" x="0"/><use href="#g7269" x="12"/><use href="#g7535" x="24"/><use href="#g6cf3" x="36"/><use href="#g56fe" x="48"/><use href="#g50cf" x="60"/><use href="#g5206" x="72"/><use href="#g6790" x="84"/><use href="#g7cfb" x="96"/><use href="#g7edf" x="108"/></svg><span class="a" id="t2" style="left:248px;top:3px;color:#c8c8c8;font:12px/14px 'Liberation Serif',serif;letter-spacing:.25px;white-space:pre">S/N: SV-0002226</span><div class="btn" style="left:972px;top:2px;width:15px;height:14px"><div class="a" style="left:4px;top:9px;width:6px;height:2px;background:#000"></div></div><div class="btn" style="left:988px;top:2px;width:15px;height:14px"><div class="a" style="left:5px;top:2px;width:7px;height:6px;border:1px solid #000;border-top-width:2px"></div><div class="a" style="left:3px;top:5px;width:7px;height:6px;border:1px solid #000;border-top-width:2px;background:#c0c0c0"></div></div><div class="btn" style="left:1006px;top:2px;width:16px;height:14px"><svg class="a" style="left:0;top:0" width="16" height="14"><path d="M4.0 3.5l7 6M11.0 3.5l-7 6" stroke="#000" stroke-width="1.500"/></svg></div><div class="a" style="left:0;top:21px;width:2px;height:722px;background:linear-gradient(90deg,#080808 50%,#5a5078 50%)"></div><div class="a" style="left:2px;top:21px;width:66px;height:722px;background:linear-gradient(90deg,#b9a9f1,#6654c0)"></div><div class="a" style="left:68px;top:21px;width:1px;height:724px;background:#e4dcff"></div><div class="a" style="left:0;top:743px;width:70px;height:2px;background:#f0ecff"></div><div class="a dith" style="left:1004px;top:21px;width:18px;height:721px"></div><div class="rb1 a" style="left:1004px;top:21px;width:18px;height:17px"><svg class="a" style="left:5px;top:6px" width="7" height="4"><path d="M0 4L3.500 0L7 4z"/></svg></div><div class="a" style="left:1004px;top:47px;width:18px;height:690px;background:#c0c0c0;box-shadow:inset 1px 1px #fff,inset -1px -1px #000"></div><div class="a" style="left:1022px;top:21px;width:2px;height:721px;background:#c0c0c0"></div><div class="a" style="left:0;top:745px;width:1024px;height:23px;background:#c0c0c0"></div><div class="a" style="left:496px;top:744px;width:528px;height:1px;background:#dfdfdf"></div><div class="a" style="left:496px;top:745px;width:528px;height:1px;background:#fff"></div><div class="a" style="left:0;top:766px;width:1024px;height:2px;background:#f4f4f4"></div><div class="a" style="left:1px;top:747px;width:54px;height:20px;background:#c0c0c0;box-shadow:inset 1px 1px #fff,inset -1px 0 #808080"></div><svg class="a" style="left:4px;top:749px" width="17" height="17" viewBox="0 0 17 17"><g stroke="#000" stroke-width="4.200" stroke-linecap="round"><path d="M8.500 2.300v12.400M3.100 5.400l10.800 6.200M3.100 11.600l10.800-6.200"/></g><g stroke="#38f0e8" stroke-width="2.300" stroke-linecap="round"><path d="M8.500 2v13M2.900 5.200l11.200 6.600M2.900 11.800l11.200-6.600"/></g><g stroke="#38f0e8" stroke-width="1.100" fill="none"><path d="M6.300 3.300l2.200 2 2.200-2M6.300 13.700l2.200-2 2.200 2M2.600 8l2.800-.8-.6-2.900M14.400 8l-2.800-.8.600-2.900M2.600 9l2.800.8-.6 2.900M14.400 9l-2.800.8.600 2.900"/></g><path d="M6.500 6.500h1v1h-1zM9.500 6.500h1v1h-1zM6.500 9.500h1v1h-1zM9.500 9.500h1v1h-1zM5 8h1.200v1h-1.200zM10.800 8h1.200v1h-1.200z" fill="#000"/><circle cx="8.500" cy="8.500" r="1.100" fill="#a0fff8"/></svg><svg class="bt" width="24" height="16" viewBox="0 0 24 16" role="img" aria-label="开始" style="fill:#000;position:absolute;left:27px;top:750px;"><title>开始</title><use href="#g5f00" x="0"/><use href="#g59cb" x="12"/></svg><div class="a" style="left:58px;top:747px;width:12px;height:19px;box-shadow:inset 1px 1px #808080,inset -1px -1px #fff"></div><div class="a" style="left:925px;top:747px;width:1px;height:19px;background:#fff"></div><div class="a" style="left:928px;top:747px;width:94px;height:19px;box-shadow:inset 1px 1px #808080,inset -1px -1px #fff"></div><div class="a" style="left:936px;top:754px;width:9px;height:7px;background:#fff;border:1px solid #808080;border-top:3px solid #000080"></div><div class="a" style="left:938px;top:758px;width:5px;height:1px;background:repeating-linear-gradient(90deg,#000080 0 1px,#fff 1px 2px)"></div><svg class="a" style="left:954px;top:751px" width="13" height="13" viewBox="0 0 13 13"><path d="M2.500 4.500C5 1.500 9.500 2 10 5.500C10.300 8 9 10 7.500 11" fill="none" stroke="#e02040" stroke-width="1.300"/><path d="M1.500 2.500l.8 3.400 3.200-.9" fill="none" stroke="#e02040" stroke-width="1.200"/></svg><span class="a" id="clock" style="left:973px;top:750px;font-size:12px;line-height:14px;letter-spacing:-.6px">13:38:50</span><div class="a" style="left:69px;top:21px;width:428px;height:316px;background:#c0c0c0;box-shadow:inset 2px 1px #fff,inset -1px 0 #000,inset -2px 0 #909090,inset -3px 0 #fff"></div><div class="a tb" style="left:71px;top:23px;width:421px;height:18px"></div><svg class="a" style="left:73px;top:23px" width="18" height="18" viewBox="0 0 18 18"><path d="M3.500 16.500L8 11.500" stroke="#000" stroke-width="1.800" stroke-dasharray="1 1"/><path d="M1.300 15.500L6.800 9.300" stroke="#fff" stroke-width="2.600" stroke-linecap="round"/><path d="M2.800 15.800L7.300 10.800" stroke="#d8d4f0" stroke-width="1"/><circle cx="10" cy="5.700" r="3.900" fill="#a8a8a8" stroke="#fff" stroke-width="2"/><circle cx="10.200" cy="6" r="2.200" fill="#b8b8b8" stroke="#000" stroke-width="1.100" stroke-dasharray="4.500 1.200"/><circle cx="10.200" cy="5.800" r=".7" fill="#000"/><path d="M13.500 1.200q3.200 1.600 2.600 7.500" stroke="#000" stroke-width="1.300" fill="none"/><path d="M8.300 12h4.700l1.200 1 2.400-2.400" stroke="#000" stroke-width="1" fill="none"/></svg><svg class="bt" width="60" height="16" viewBox="0 0 60 16" role="img" aria-label="分子量计算" style="fill:#c8c8c8;position:absolute;left:91px;top:24px;"><title>分子量计算</title><use href="#g5206" x="0"/><use href="#g5b50" x="12"/><use href="#g91cf" x="24"/><use href="#g8ba1" x="36"/><use href="#g7b97" x="48"/></svg><div class="btn" style="left:476px;top:25px;width:16px;height:14px"><svg class="a" style="left:0;top:0" width="16" height="14"><path d="M4.0 3.5l7 6M11.0 3.5l-7 6" stroke="#000" stroke-width="1.500"/></svg></div><div class="a" style="left:71px;top:42px;width:422px;height:29px;background:#c0c0c0;box-shadow:inset 1px 1px #fff,inset -1px -1px #808080"></div><div class="a" style="left:71px;top:71px;width:422px;height:1px;background:#dfdfdf"></div><div class="a sk" style="left:75px;top:46px;width:64px;height:19px;background:#fff"></div><svg class="bt" width="24" height="16" viewBox="0 0 24 16" role="img" aria-label="自动" style="fill:#000;position:absolute;left:80px;top:48px;"><title>自动</title><use href="#g81ea" x="0"/><use href="#g52a8" x="12"/></svg><div class="rb1 a" style="left:120px;top:48px;width:17px;height:15px"><svg class="a" style="left:5px;top:6px" width="7" height="4"><path d="M0 0h7L3.500 4z"/></svg></div><span class="a" id="mw" style="left:143px;top:49px;font-size:12px;line-height:14px;letter-spacing:-1px">MW</span><div class="a" style="left:167px;top:46px;width:77px;height:20px;background:#000;box-shadow:inset 1px 1px #d8d8d8,inset -1px -1px #fff"></div><span class="a" id="lcd1" style="left:167px;top:47px;width:73px;text-align:right;font-size:14px;line-height:17px;font-weight:bold;color:#28f038">1,850,141</span><span class="a" id="bp" style="left:249px;top:49px;font-size:12px;line-height:14px;letter-spacing:-.5px">bp</span><div class="a" style="left:265px;top:46px;width:56px;height:20px;background:#000;box-shadow:inset 1px 1px #d8d8d8,inset -1px -1px #fff"></div><span class="a" id="lcd2" style="left:265px;top:47px;width:54px;text-align:right;font-size:14px;line-height:17px;font-weight:bold;color:#28f038">2,775</span><div class="a" style="left:324px;top:47px;width:24px;height:18px;background:#c0c0c0;box-shadow:inset 0 0 0 1px #fff,inset 0 0 0 2px #000,inset -3px -3px #989898,inset 3px 3px #e8e8e8;text-align:center;font-size:12px;line-height:18px">R</div><div class="a" style="left:352px;top:47px;width:24px;height:18px;background:#c0c0c0;box-shadow:inset 0 0 0 1px #fff,inset 2px 2px #fff,inset -3px -3px #989898;text-align:center;font-size:12px;line-height:18px">U</div><div class="a" style="left:380px;top:47px;width:25px;height:18px;background:#c0c0c0;box-shadow:inset 0 0 0 1px #fff,inset 2px 2px #fff,inset -3px -3px #989898;text-align:center;font-size:12px;line-height:18px">M</div><div class="a" style="left:72px;top:73px;width:420px;height:261px;background:#000"></div><div class="a" style="left:492px;top:73px;width:2px;height:262px;background:#fff"></div><svg class="a" style="left:0;top:0" width="100" height="340" shape-rendering="crispEdges"><rect x="73" y="74" width="17" height="259" fill="#e4e4dc"/><rect x="75" y="74" width="4" height="259" fill="#e0e0f4"/><path d="M78 74h12v1h-12zM82 77h8v1h-8zM82 80h8v1h-8zM82 83h8v1h-8zM82 86h8v1h-8zM78 89h12v1h-12zM82 92h8v1h-8zM82 95h8v1h-8zM82 98h8v1h-8zM82 101h8v1h-8zM78 104h12v1h-12zM82 107h8v1h-8zM82 110h8v1h-8zM82 113h8v1h-8zM82 116h8v1h-8zM78 119h12v1h-12zM82 122h8v1h-8zM82 125h8v1h-8zM82 128h8v1h-8zM82 131h8v1h-8zM78 134h12v1h-12zM82 137h8v1h-8zM82 140h8v1h-8zM82 143h8v1h-8zM82 146h8v1h-8zM78 149h12v1h-12zM82 152h8v1h-8zM82 155h8v1h-8zM82 158h8v1h-8zM82 161h8v1h-8zM78 164h12v1h-12zM82 167h8v1h-8zM82 170h8v1h-8zM82 173h8v1h-8zM82 176h8v1h-8zM78 179h12v1h-12zM82 182h8v1h-8zM82 185h8v1h-8zM82 188h8v1h-8zM82 191h8v1h-8zM78 194h12v1h-12zM82 197h8v1h-8zM82 200h8v1h-8zM82 203h8v1h-8zM82 206h8v1h-8zM78 209h12v1h-12zM82 212h8v1h-8zM82 215h8v1h-8zM82 218h8v1h-8zM82 221h8v1h-8zM78 224h12v1h-12zM82 227h8v1h-8zM82 230h8v1h-8zM82 233h8v1h-8zM82 236h8v1h-8zM78 239h12v1h-12zM82 242h8v1h-8zM82 245h8v1h-8zM82 248h8v1h-8zM82 251h8v1h-8zM78 254h12v1h-12zM82 257h8v1h-8zM82 260h8v1h-8zM82 263h8v1h-8zM82 266h8v1h-8zM78 269h12v1h-12zM82 272h8v1h-8zM82 275h8v1h-8zM82 278h8v1h-8zM82 281h8v1h-8zM78 284h12v1h-12zM82 287h8v1h-8zM82 290h8v1h-8zM82 293h8v1h-8zM82 296h8v1h-8zM78 299h12v1h-12zM82 302h8v1h-8zM82 305h8v1h-8zM82 308h8v1h-8zM82 311h8v1h-8zM78 314h12v1h-12zM82 317h8v1h-8zM82 320h8v1h-8zM82 323h8v1h-8zM82 326h8v1h-8zM78 329h12v1h-12zM82 332h8v1h-8z" fill="#000"/></svg><svg class="a" style="left:90px;top:74px" width="385" height="259" viewBox="90 74 385 259"><defs><filter id="b1" x="-10%" y="-50%" width="120%" height="200%"><feGaussianBlur stdDeviation="1.6 1.4"/></filter><filter id="b2" x="-10%" y="-50%" width="120%" height="200%"><feGaussianBlur stdDeviation="1.8 1.6"/></filter><linearGradient id="lg2" x1="0" y1="0" x2="0" y2="1"><stop offset="0" stop-color="#fff"/><stop offset=".45" stop-color="#e8e8e8"/><stop offset="1" stop-color="#707070"/></linearGradient></defs><rect x="90" y="74" width="385" height="259" fill="#121212"/><rect x="90" y="74" width="385" height="2" fill="#000080"/><rect x="99" y="137.0" width="40" height="8" fill="#fff" opacity="1" filter="url(#b1)"/><rect x="99" y="162.75" width="40" height="6.5" fill="#fff" opacity="1" filter="url(#b1)"/><rect x="99" y="179.0" width="40" height="5" fill="#fff" opacity="1" filter="url(#b1)"/><rect x="99" y="188.0" width="40" height="5" fill="#fff" opacity="1" filter="url(#b1)"/><rect x="99" y="211.5" width="40" height="5" fill="#fff" opacity="0.95" filter="url(#b1)"/><rect x="99" y="238.75" width="40" height="5.5" fill="#fff" opacity="0.95" filter="url(#b1)"/><rect x="99" y="246.25" width="40" height="4.5" fill="#ddd" opacity="0.9" filter="url(#b1)"/><rect x="99" y="271.25" width="40" height="4.5" fill="#b0b0b0" opacity="0.9" filter="url(#b1)"/><rect x="205" y="133" width="40" height="12" fill="#909090" filter="url(#b1)"/><path d="M203 122.500q1.500-2 3 2q19 2 37.500 0q2-5.500 3.500-3v15h-44z" fill="#ececec" filter="url(#b1)"/><rect x="206" y="163.0" width="38" height="2" fill="#666" opacity="0.8" filter="url(#b1)"/><path d="M311.500 135q1.500-4 3 1q17.500 2 35 0q1.500-5 3-1v11h-41z" fill="#fff" filter="url(#b1)"/><rect x="313" y="147.0" width="38" height="14" fill="#383838" opacity="1" filter="url(#b2)"/><rect x="312" y="162.25" width="40" height="7.5" fill="#fff" opacity="1" filter="url(#b1)"/><rect x="312" y="188.75" width="40" height="6.5" fill="#fff" opacity="1" filter="url(#b1)"/><rect x="312" y="211.75" width="40" height="6.5" fill="#fff" opacity="1" filter="url(#b1)"/><rect x="312" y="241.0" width="40" height="6" fill="#f4f4f4" opacity="1" filter="url(#b1)"/><rect x="312" y="247.5" width="40" height="6" fill="#e0e0e0" opacity="1" filter="url(#b1)"/><rect x="312" y="275.0" width="40" height="6" fill="#d0d0d0" opacity="0.95" filter="url(#b1)"/><rect x="417" y="135.5" width="44" height="9" fill="#fff" opacity="1" filter="url(#b1)"/><rect x="417" y="162.25" width="44" height="7.5" fill="#fff" opacity="1" filter="url(#b1)"/><rect x="417" y="177.5" width="44" height="6" fill="#fff" opacity="1" filter="url(#b1)"/><rect x="417" y="187.0" width="44" height="6" fill="#f0f0f0" opacity="1" filter="url(#b1)"/><rect x="417" y="210.5" width="44" height="6" fill="#d8d8d8" opacity="1" filter="url(#b1)"/><rect x="419" y="148.0" width="40" height="10" fill="#1e1e1e" opacity="1" filter="url(#b2)"/><path d="M417 274.500q22-5 44 0" stroke="#c4c4c4" stroke-width="5.500" fill="none" filter="url(#b1)"/><rect x="96" y="142.3" width="48" height="1.500" fill="#f41414"/><text x="91.500" y="145.8" font-size="7" fill="#f01010" font-family="Liberation Sans">1</text><rect x="96" y="166.3" width="48" height="1.500" fill="#f41414"/><text x="91.500" y="169.8" font-size="7" fill="#f01010" font-family="Liberation Sans">2</text><rect x="96" y="181.8" width="48" height="1.500" fill="#f41414"/><text x="91.500" y="185.3" font-size="7" fill="#f01010" font-family="Liberation Sans">3</text><rect x="96" y="190.8" width="48" height="1.500" fill="#f41414"/><text x="91.500" y="194.3" font-size="7" fill="#f01010" font-family="Liberation Sans">4</text><rect x="96" y="214.3" width="48" height="1.500" fill="#f41414"/><text x="91.500" y="217.8" font-size="7" fill="#f01010" font-family="Liberation Sans">5</text><rect x="96" y="242.3" width="48" height="1.500" fill="#f41414"/><text x="91.500" y="245.8" font-size="7" fill="#f01010" font-family="Liberation Sans">6</text><rect x="96" y="248.3" width="48" height="1.500" fill="#f41414"/><text x="91.500" y="251.8" font-size="7" fill="#f01010" font-family="Liberation Sans">7</text><rect x="96" y="274.3" width="48" height="1.500" fill="#f41414"/><text x="91.500" y="277.8" font-size="7" fill="#f01010" font-family="Liberation Sans">8</text><rect x="307" y="143.8" width="50" height="1.500" fill="#38f038"/><rect x="307" y="165.8" width="50" height="1.500" fill="#38f038"/><rect x="307" y="192.3" width="50" height="1.500" fill="#38f038"/><rect x="307" y="215.3" width="50" height="1.500" fill="#38f038"/><rect x="307" y="244.3" width="50" height="1.500" fill="#38f038"/><rect x="307" y="250.3" width="50" height="1.500" fill="#38f038"/><rect x="307" y="278.3" width="50" height="1.500" fill="#38f038"/><rect x="414" y="141.8" width="48" height="1.500" fill="#38f038"/><rect x="414" y="166.3" width="48" height="1.500" fill="#38f038"/><rect x="414" y="180.3" width="48" height="1.500" fill="#38f038"/><rect x="414" y="189.8" width="48" height="1.500" fill="#38f038"/><rect x="414" y="213.3" width="48" height="1.500" fill="#38f038"/><rect x="414" y="272.8" width="48" height="1.500" fill="#38f038"/></svg><div class="a dith" style="left:475px;top:74px;width:16px;height:259px"></div><div class="rb1 a" style="left:475px;top:74px;width:16px;height:17px"><svg class="a" style="left:4px;top:6px" width="7" height="4"><path d="M0 4L3.500 0L7 4z"/></svg></div><div class="rb1 a" style="left:475px;top:91px;width:16px;height:143px"></div><div class="a" style="left:71px;top:334px;width:421px;height:1px;background:#d0d0d0"></div><div class="a" style="left:70px;top:335px;width:425px;height:1px;background:#fff"></div><div class="a" style="left:68px;top:335px;width:428px;height:433px;background:#fff;box-shadow:inset -1px 0 #000,inset -4px 0 #c0c0c0"></div><div class="a" style="left:71px;top:338px;width:3px;height:430px;background:linear-gradient(90deg,#ece8f8,#dcdcdc)"></div><div class="a tba" style="left:74px;top:338px;width:418px;height:18px"></div><div class="a" style="left:76px;top:339px;width:15px;height:15px;background:#c0c0c0;box-shadow:inset 1px 1px #fff,inset -1px -1px #808080"><svg class="a" style="left:0;top:0" width="15" height="15"><path d="M3 9.500l2.500-2 2 2 4.500-4.500" stroke="#404040" fill="none" stroke-width="1"/><path d="M2.500 3v9.500h10" stroke="#a0a0a0" fill="none" stroke-width="1" stroke-dasharray="1 1"/></svg></div><span class="a" id="t3" style="left:94px;top:341px;color:#fff;font:bold 12px/14px 'Liberation Mono',monospace;transform:scaleX(.8333);transform-origin:0 0;white-space:pre">lg MW - Rf</span><div class="btn" style="left:440px;top:340px;width:16px;height:14px"><div class="a" style="left:4px;top:9px;width:6px;height:2px;background:#808080;box-shadow:1px 1px #fff"></div></div><div class="btn" style="left:456px;top:340px;width:16px;height:14px"><div class="a" style="left:3px;top:2px;width:9px;height:9px;border:1px solid #000;border-top-width:2px"></div></div><div class="btn" style="left:474px;top:340px;width:16px;height:14px"><svg class="a" style="left:0;top:0" width="16" height="14"><path d="M4.0 3.5l7 6M11.0 3.5l-7 6" stroke="#000" stroke-width="1.500"/></svg></div><svg class="a" style="left:74px;top:356px" width="418" height="410" viewBox="74 356 418 410"><rect x="74" y="356" width="418" height="412" fill="#e0e0e0"/><path d="M116 356h1v412h-1zM158 356h1v412h-1zM199 356h1v412h-1zM241 356h1v412h-1zM283 356h1v412h-1zM325 356h1v412h-1zM367 356h1v412h-1zM408 356h1v412h-1zM450 356h1v412h-1zM492 356h1v412h-1zM74 382h418v1h-418zM74 410h418v1h-418zM74 438h418v1h-418zM74 466h418v1h-418zM74 494h418v1h-418zM74 522h418v1h-418zM74 550h418v1h-418zM74 578h418v1h-418zM74 606h418v1h-418zM74 634h418v1h-418zM74 662h418v1h-418zM74 690h418v1h-418zM74 718h418v1h-418zM74 746h418v1h-418zM74 774h418v1h-418z" fill="#c4c4c4" shape-rendering="crispEdges"/><text x="78.500" y="376" font-size="9" fill="#b8b8b8" font-family="Liberation Sans">7.00</text><text x="78.500" y="404" font-size="9" fill="#b8b8b8" font-family="Liberation Sans">6.75</text><text x="78.500" y="432" font-size="9" fill="#b8b8b8" font-family="Liberation Sans">6.50</text><text x="78.500" y="460" font-size="9" fill="#b8b8b8" font-family="Liberation Sans">6.25</text><text x="78.500" y="488" font-size="9" fill="#b8b8b8" font-family="Liberation Sans">6.00</text><text x="78.500" y="516" font-size="9" fill="#b8b8b8" font-family="Liberation Sans">5.75</text><text x="78.500" y="544" font-size="9" fill="#b8b8b8" font-family="Liberation Sans">5.50</text><text x="78.500" y="572" font-size="9" fill="#b8b8b8" font-family="Liberation Sans">5.25</text><text x="78.500" y="600" font-size="9" fill="#b8b8b8" font-family="Liberation Sans">5.00</text><text x="78.500" y="628" font-size="9" fill="#b8b8b8" font-family="Liberation Sans">4.75</text><text x="78.500" y="656" font-size="9" fill="#b8b8b8" font-family="Liberation Sans">4.50</text><text x="78.500" y="684" font-size="9" fill="#b8b8b8" font-family="Liberation Sans">4.25</text><text x="78.500" y="712" font-size="9" fill="#b8b8b8" font-family="Liberation Sans">4.00</text><text x="78.500" y="740" font-size="9" fill="#b8b8b8" font-family="Liberation Sans">3.75</text><text x="78.500" y="768" font-size="9" fill="#b8b8b8" font-family="Liberation Sans">3.50</text><text x="120.5" y="763" font-size="9" fill="#b8b8b8" font-family="Liberation Sans">0.1</text><text x="162.2" y="763" font-size="9" fill="#b8b8b8" font-family="Liberation Sans">0.2</text><text x="204.0" y="763" font-size="9" fill="#b8b8b8" font-family="Liberation Sans">0.3</text><text x="245.8" y="763" font-size="9" fill="#b8b8b8" font-family="Liberation Sans">0.4</text><text x="287.5" y="763" font-size="9" fill="#b8b8b8" font-family="Liberation Sans">0.5</text><text x="329.2" y="763" font-size="9" fill="#b8b8b8" font-family="Liberation Sans">0.6</text><text x="371.0" y="763" font-size="9" fill="#b8b8b8" font-family="Liberation Sans">0.7</text><text x="412.8" y="763" font-size="9" fill="#b8b8b8" font-family="Liberation Sans">0.8</text><text x="454.5" y="763" font-size="9" fill="#b8b8b8" font-family="Liberation Sans">0.9</text><path d="M74 463.8L492 720.5" stroke="#101010" stroke-width="1.100"/><rect x="162" y="526" width="3" height="4" fill="#900000"/><text x="163.8" y="539.7" font-size="9" fill="#902020" font-family="Liberation Sans">1</text><rect x="194" y="537" width="3" height="4" fill="#900000"/><text x="196.3" y="550.6" font-size="9" fill="#902020" font-family="Liberation Sans">2</text><rect x="214" y="546" width="3" height="4" fill="#900000"/><text x="215.5" y="559.4" font-size="9" fill="#902020" font-family="Liberation Sans">3</text><rect x="225" y="551" width="3" height="4" fill="#900000"/><text x="227.2" y="564.6" font-size="9" fill="#902020" font-family="Liberation Sans">4</text><rect x="257" y="571" width="3" height="4" fill="#900000"/><text x="258.5" y="584.3" font-size="9" fill="#902020" font-family="Liberation Sans">5</text><rect x="292" y="590" width="3" height="4" fill="#900000"/><text x="293.6" y="604.0" font-size="9" fill="#902020" font-family="Liberation Sans">6</text><rect x="300" y="598" width="3" height="4" fill="#900000"/><text x="301.5" y="612.0" font-size="9" fill="#902020" font-family="Liberation Sans">7</text><rect x="333" y="635" width="3" height="4" fill="#900000"/><text x="335.4" y="648.6" font-size="9" fill="#902020" font-family="Liberation Sans">8</text><rect x="164" y="518" width="4" height="4" fill="#187818"/><text x="165.3" y="512.2" font-size="9" fill="#208020" font-family="Liberation Sans">1</text><rect x="193" y="536" width="4" height="4" fill="#187818"/><text x="194.1" y="529.9" font-size="9" fill="#208020" font-family="Liberation Sans">2</text><rect x="226" y="557" width="4" height="4" fill="#187818"/><text x="227.9" y="550.6" font-size="9" fill="#208020" font-family="Liberation Sans">3</text><rect x="257" y="576" width="4" height="4" fill="#187818"/><text x="258.8" y="569.6" font-size="9" fill="#208020" font-family="Liberation Sans">4</text><rect x="295" y="599" width="4" height="4" fill="#187818"/><text x="296.8" y="592.9" font-size="9" fill="#208020" font-family="Liberation Sans">5</text><rect x="303" y="604" width="4" height="4" fill="#187818"/><text x="304.3" y="597.6" font-size="9" fill="#208020" font-family="Liberation Sans">6</text><rect x="340" y="626" width="4" height="4" fill="#187818"/><text x="341.0" y="620.1" font-size="9" fill="#208020" font-family="Liberation Sans">7</text><rect x="161" y="517" width="4" height="4" fill="#187818"/><text x="162.8" y="510.6" font-size="9" fill="#208020" font-family="Liberation Sans">8</text><rect x="193" y="536" width="4" height="4" fill="#187818"/><text x="194.1" y="529.9" font-size="9" fill="#208020" font-family="Liberation Sans">9</text><rect x="212" y="548" width="4" height="4" fill="#187818"/><text x="213.3" y="541.7" font-size="9" fill="#208020" font-family="Liberation Sans">10</text><rect x="223" y="555" width="4" height="4" fill="#187818"/><text x="225.0" y="548.8" font-size="9" fill="#208020" font-family="Liberation Sans">11</text><rect x="255" y="574" width="4" height="4" fill="#187818"/><text x="256.5" y="568.2" font-size="9" fill="#208020" font-family="Liberation Sans">12</text><rect x="332" y="621" width="4" height="4" fill="#187818"/><text x="333.1" y="615.2" font-size="9" fill="#208020" font-family="Liberation Sans">13</text></svg><div class="a" style="left:374px;top:369px;width:102px;height:88px;background:#c0c0c0;box-shadow:inset 1px 1px #282828,inset -1px -1px #fff,inset 2px 2px #909090,inset -2px -2px #e8e8e8"></div><div class="a" style="left:385px;top:380px;width:15px;height:15px;background:#00ff00;border:1px solid #000"></div><div class="a" style="left:385px;top:402px;width:15px;height:15px;background:#ff0000;border:1px solid #000"></div><svg class="bt" width="60" height="16" viewBox="0 0 60 16" role="img" aria-label="未知分子量" style="fill:#000;position:absolute;left:407px;top:381px;"><title>未知分子量</title><use href="#g672a" x="0"/><use href="#g77e5" x="12"/><use href="#g5206" x="24"/><use href="#g5b50" x="36"/><use href="#g91cf" x="48"/></svg><svg class="bt" width="60" height="16" viewBox="0 0 60 16" role="img" aria-label="已知分子量" style="fill:#000;position:absolute;left:407px;top:403px;"><title>已知分子量</title><use href="#g5df2" x="0"/><use href="#g77e5" x="12"/><use href="#g5206" x="24"/><use href="#g5b50" x="36"/><use href="#g91cf" x="48"/></svg><div class="btn" style="left:384px;top:425px;width:83px;height:25px"></div><svg class="bt" width="24" height="16" viewBox="0 0 24 16" role="img" aria-label="打印" style="fill:#000;position:absolute;left:414px;top:429px;"><title>打印</title><use href="#g6253" x="0"/><use href="#g5370" x="12"/></svg><div class="a" style="left:496px;top:133px;width:523px;height:474px;background:#c0c0c0;box-shadow:inset 1px 1px #f4f4f4,inset 0 2px #fff,inset -1px -1px #000"></div><div class="a tb" style="left:498px;top:136px;width:518px;height:18px"></div><svg class="a" style="left:500px;top:136px" width="16" height="17" shape-rendering="crispEdges"><rect x="2" y="2" width="13" height="15" fill="#000"/><rect x="1" y="1" width="11" height="13" fill="#fff"/><rect x="3" y="4" width="7" height="1" fill="#808080"/><rect x="3" y="7" width="7" height="1" fill="#808080"/><rect x="3" y="10" width="4" height="1" fill="#808080"/><rect x="8" y="10" width="4" height="4" fill="#000"/><rect x="9" y="11" width="3" height="3" fill="#e0e0e0"/></svg><svg class="bt" width="84" height="16" viewBox="0 0 84 16" role="img" aria-label="分子量计算报告" style="fill:#c8c8c8;position:absolute;left:518px;top:137px;"><title>分子量计算报告</title><use href="#g5206" x="0"/><use href="#g5b50" x="12"/><use href="#g91cf" x="24"/><use href="#g8ba1" x="36"/><use href="#g7b97" x="48"/><use href="#g62a5" x="60"/><use href="#g544a" x="72"/></svg><div class="btn" style="left:998px;top:138px;width:16px;height:14px"><svg class="a" style="left:0;top:0" width="16" height="14"><path d="M4.0 3.5l7 6M11.0 3.5l-7 6" stroke="#000" stroke-width="1.500"/></svg></div><svg class="bt" width="30" height="16" viewBox="0 0 30 16" role="img" aria-label="已知:" style="fill:#000;position:absolute;left:502px;top:161px;"><title>已知:</title><use href="#g5df2" x="0"/><use href="#g77e5" x="12"/><use href="#g3a" x="24"/></svg><svg class="bt" width="30" height="16" viewBox="0 0 30 16" role="img" aria-label="未知:" style="fill:#000;position:absolute;left:502px;top:361px;"><title>未知:</title><use href="#g672a" x="0"/><use href="#g77e5" x="12"/><use href="#g3a" x="24"/></svg><div class="a" style="left:504px;top:181px;width:505px;height:173px;background:#f0f0ff;box-shadow:inset 1px 1px #000,inset -1px -1px #fff"></div><div class="a" style="left:505px;top:181px;width:485px;height:172px;overflow:hidden;clip-path:inset(1px 0 0 0)"><div class="a" style="left:0;top:0;width:485px;height:16px;background:#c0c0ff;border-bottom:1px solid #000"></div><svg class="a" style="left:0;top:0" width="485" height="174" shape-rendering="crispEdges"><rect x="0" y="16" width="24" height="174" fill="#c0c0ff"/><path d="M0 16h24v1h-24zM0 31h24v1h-24zM0 46h24v1h-24zM0 61h24v1h-24zM0 76h24v1h-24zM0 91h24v1h-24zM0 106h24v1h-24zM0 121h24v1h-24zM0 136h24v1h-24zM0 151h24v1h-24zM0 166h24v1h-24zM0 181h24v1h-24zM0 196h24v1h-24z" fill="#fff" opacity=".6"/><path d="M124 16h1v174h-1zM214 16h1v174h-1zM304 16h1v174h-1zM394 16h1v174h-1zM484 16h1v174h-1zM25 30h460v1h-460zM25 45h460v1h-460zM25 60h460v1h-460zM25 75h460v1h-460zM25 90h460v1h-460zM25 105h460v1h-460zM25 120h460v1h-460zM25 135h460v1h-460zM25 150h460v1h-460zM25 165h460v1h-460zM25 180h460v1h-460zM25 195h460v1h-460z" fill="#c2c2d2"/><path d="M124 0h1v16h-1zM214 0h1v16h-1zM304 0h1v16h-1zM394 0h1v16h-1zM484 0h1v16h-1zM24 0h1v174h-1zM0 30h25v1h-25zM0 45h25v1h-25zM0 60h25v1h-25zM0 75h25v1h-25zM0 90h25v1h-25zM0 105h25v1h-25zM0 120h25v1h-25zM0 135h25v1h-25zM0 150h25v1h-25zM0 165h25v1h-25zM0 180h25v1h-25zM0 195h25v1h-25z" fill="#000"/></svg><svg class="bt" width="24" height="16" viewBox="0 0 24 16" role="img" aria-label="说明" style="fill:#000;position:absolute;left:28px;top:0px;"><title>说明</title><use href="#g8bf4" x="0"/><use href="#g660e" x="12"/></svg><svg class="bt" width="36" height="16" viewBox="0 0 36 16" role="img" aria-label="分子量" style="fill:#000;position:absolute;left:128px;top:0px;"><title>分子量</title><use href="#g5206" x="0"/><use href="#g5b50" x="12"/><use href="#g91cf" x="24"/></svg><svg class="bt" width="72" height="16" viewBox="0 0 72 16" role="img" aria-label="碱基对数(bp)" style="fill:#000;position:absolute;left:218px;top:0px;"><title>碱基对数(bp)</title><use href="#g78b1" x="0"/><use href="#g57fa" x="12"/><use href="#g5bf9" x="24"/><use href="#g6570" x="36"/><use href="#g28" x="48"/><use href="#g62" x="54"/><use href="#g70" x="60"/><use href="#g29" x="66"/></svg><svg class="bt" width="54" height="16" viewBox="0 0 54 16" role="img" aria-label="lg 分子量" style="fill:#000;position:absolute;left:308px;top:0px;"><title>lg 分子量</title><use href="#g6c" x="0"/><use href="#g67" x="6"/><use href="#g5206" x="18"/><use href="#g5b50" x="30"/><use href="#g91cf" x="42"/></svg><svg class="bt" width="84" height="16" viewBox="0 0 84 16" role="img" aria-label="相对迁移率(Rf)" style="fill:#000;position:absolute;left:398px;top:0px;"><title>相对迁移率(Rf)</title><use href="#g76f8" x="0"/><use href="#g5bf9" x="12"/><use href="#g8fc1" x="24"/><use href="#g79fb" x="36"/><use href="#g7387" x="48"/><use href="#g28" x="60"/><use href="#g52" x="66"/><use href="#g66" x="72"/><use href="#g29" x="78"/></svg><div class="cell" style="left:0;top:16px;width:24px;padding-right:2px">1</div><div class="cell" style="left:125px;top:16px;width:89px">500<i>,</i>000</div><div class="cell" style="left:215px;top:16px;width:89px">750</div><div class="cell" style="left:305px;top:16px;width:89px">5<i>.</i>699</div><div class="cell" style="left:395px;top:16px;width:89px">0<i>.</i>212</div><div class="cell" style="left:0;top:31px;width:24px;padding-right:2px">2</div><div class="cell" style="left:125px;top:31px;width:89px">400<i>,</i>000</div><div class="cell" style="left:215px;top:31px;width:89px">600</div><div class="cell" style="left:305px;top:31px;width:89px">5<i>.</i>602</div><div class="cell" style="left:395px;top:31px;width:89px">0<i>.</i>290</div><div class="cell" style="left:0;top:46px;width:24px;padding-right:2px">3</div><div class="cell" style="left:125px;top:46px;width:89px">333<i>,</i>333</div><div class="cell" style="left:215px;top:46px;width:89px">499</div><div class="cell" style="left:305px;top:46px;width:89px">5<i>.</i>523</div><div class="cell" style="left:395px;top:46px;width:89px">0<i>.</i>336</div><div class="cell" style="left:0;top:61px;width:24px;padding-right:2px">4</div><div class="cell" style="left:125px;top:61px;width:89px">300<i>,</i>000</div><div class="cell" style="left:215px;top:61px;width:89px">450</div><div class="cell" style="left:305px;top:61px;width:89px">5<i>.</i>477</div><div class="cell" style="left:395px;top:61px;width:89px">0<i>.</i>364</div><div class="cell" style="left:0;top:76px;width:24px;padding-right:2px">5</div><div class="cell" style="left:125px;top:76px;width:89px">200<i>,</i>000</div><div class="cell" style="left:215px;top:76px;width:89px">300</div><div class="cell" style="left:305px;top:76px;width:89px">5<i>.</i>301</div><div class="cell" style="left:395px;top:76px;width:89px">0<i>.</i>439</div><div class="cell" style="left:0;top:91px;width:24px;padding-right:2px">6</div><div class="cell" style="left:125px;top:91px;width:89px">133<i>,</i>333</div><div class="cell" style="left:215px;top:91px;width:89px">199</div><div class="cell" style="left:305px;top:91px;width:89px">5<i>.</i>125</div><div class="cell" style="left:395px;top:91px;width:89px">0<i>.</i>523</div><div class="cell" style="left:0;top:106px;width:24px;padding-right:2px">7</div><div class="cell" style="left:125px;top:106px;width:89px">113<i>,</i>333</div><div class="cell" style="left:215px;top:106px;width:89px">169</div><div class="cell" style="left:305px;top:106px;width:89px">5<i>.</i>054</div><div class="cell" style="left:395px;top:106px;width:89px">0<i>.</i>542</div><div class="cell" style="left:0;top:121px;width:24px;padding-right:2px">8</div><div class="cell" style="left:125px;top:121px;width:89px">53<i>,</i>333</div><div class="cell" style="left:215px;top:121px;width:89px">79</div><div class="cell" style="left:305px;top:121px;width:89px">4<i>.</i>727</div><div class="cell" style="left:395px;top:121px;width:89px">0<i>.</i>623</div><div class="cell" style="left:0;top:136px;width:24px;padding-right:2px">9</div><div class="cell" style="left:0;top:151px;width:24px;padding-right:2px">10</div><div class="cell" style="left:0;top:166px;width:24px;padding-right:2px">11</div></div><div class="a dith" style="left:990px;top:182px;width:18px;height:171px"></div><div class="rb1 a" style="left:990px;top:182px;width:18px;height:17px"><svg class="a" style="left:5px;top:6px" width="7" height="4"><path d="M0 4L3.500 0L7 4z"/></svg></div><div class="rb1 a" style="left:990px;top:199px;width:18px;height:19px"></div><div class="rb1 a" style="left:990px;top:336px;width:18px;height:17px"><svg class="a" style="left:5px;top:6px" width="7" height="4"><path d="M0 0h7L3.500 4z"/></svg></div><div class="a" style="left:504px;top:381px;width:505px;height:173px;background:#fff0f0;box-shadow:inset 1px 1px #000,inset -1px -1px #fff"></div><div class="a" style="left:505px;top:381px;width:485px;height:172px;overflow:hidden;clip-path:inset(1px 0 0 0)"><div class="a" style="left:0;top:0;width:485px;height:16px;background:#ffc0c0;border-bottom:1px solid #000"></div><svg class="a" style="left:0;top:0" width="485" height="174" shape-rendering="crispEdges"><rect x="0" y="16" width="24" height="174" fill="#ffc0c0"/><path d="M0 16h24v1h-24zM0 31h24v1h-24zM0 46h24v1h-24zM0 61h24v1h-24zM0 76h24v1h-24zM0 91h24v1h-24zM0 106h24v1h-24zM0 121h24v1h-24zM0 136h24v1h-24zM0 151h24v1h-24zM0 166h24v1h-24zM0 181h24v1h-24zM0 196h24v1h-24z" fill="#fff" opacity=".6"/><path d="M124 16h1v174h-1zM214 16h1v174h-1zM304 16h1v174h-1zM394 16h1v174h-1zM484 16h1v174h-1zM25 30h460v1h-460zM25 45h460v1h-460zM25 60h460v1h-460zM25 75h460v1h-460zM25 90h460v1h-460zM25 105h460v1h-460zM25 120h460v1h-460zM25 135h460v1h-460zM25 150h460v1h-460zM25 165h460v1h-460zM25 180h460v1h-460zM25 195h460v1h-460z" fill="#d6c2c2"/><path d="M124 0h1v16h-1zM214 0h1v16h-1zM304 0h1v16h-1zM394 0h1v16h-1zM484 0h1v16h-1zM24 0h1v174h-1zM0 30h25v1h-25zM0 45h25v1h-25zM0 60h25v1h-25zM0 75h25v1h-25zM0 90h25v1h-25zM0 105h25v1h-25zM0 120h25v1h-25zM0 135h25v1h-25zM0 150h25v1h-25zM0 165h25v1h-25zM0 180h25v1h-25zM0 195h25v1h-25z" fill="#000"/></svg><svg class="bt" width="24" height="16" viewBox="0 0 24 16" role="img" aria-label="说明" style="fill:#000;position:absolute;left:28px;top:0px;"><title>说明</title><use href="#g8bf4" x="0"/><use href="#g660e" x="12"/></svg><svg class="bt" width="36" height="16" viewBox="0 0 36 16" role="img" aria-label="分子量" style="fill:#000;position:absolute;left:128px;top:0px;"><title>分子量</title><use href="#g5206" x="0"/><use href="#g5b50" x="12"/><use href="#g91cf" x="24"/></svg><svg class="bt" width="72" height="16" viewBox="0 0 72 16" role="img" aria-label="碱基对数(bp)" style="fill:#000;position:absolute;left:218px;top:0px;"><title>碱基对数(bp)</title><use href="#g78b1" x="0"/><use href="#g57fa" x="12"/><use href="#g5bf9" x="24"/><use href="#g6570" x="36"/><use href="#g28" x="48"/><use href="#g62" x="54"/><use href="#g70" x="60"/><use href="#g29" x="66"/></svg><svg class="bt" width="54" height="16" viewBox="0 0 54 16" role="img" aria-label="lg 分子量" style="fill:#000;position:absolute;left:308px;top:0px;"><title>lg 分子量</title><use href="#g6c" x="0"/><use href="#g67" x="6"/><use href="#g5206" x="18"/><use href="#g5b50" x="30"/><use href="#g91cf" x="42"/></svg><svg class="bt" width="84" height="16" viewBox="0 0 84 16" role="img" aria-label="相对迁移率(Rf)" style="fill:#000;position:absolute;left:398px;top:0px;"><title>相对迁移率(Rf)</title><use href="#g76f8" x="0"/><use href="#g5bf9" x="12"/><use href="#g8fc1" x="24"/><use href="#g79fb" x="36"/><use href="#g7387" x="48"/><use href="#g28" x="60"/><use href="#g52" x="66"/><use href="#g66" x="72"/><use href="#g29" x="78"/></svg><div class="cell" style="left:0;top:16px;width:24px;padding-right:2px">1</div><div class="cell" style="left:125px;top:16px;width:89px">585<i>,</i>633</div><div class="cell" style="left:215px;top:16px;width:89px">878</div><div class="cell" style="left:305px;top:16px;width:89px">5<i>.</i>768</div><div class="cell" style="left:395px;top:16px;width:89px">0<i>.</i>218</div><div class="cell" style="left:0;top:31px;width:24px;padding-right:2px">2</div><div class="cell" style="left:125px;top:31px;width:89px">407<i>,</i>957</div><div class="cell" style="left:215px;top:31px;width:89px">611</div><div class="cell" style="left:305px;top:31px;width:89px">5<i>.</i>611</div><div class="cell" style="left:395px;top:31px;width:89px">0<i>.</i>287</div><div class="cell" style="left:0;top:46px;width:24px;padding-right:2px">3</div><div class="cell" style="left:125px;top:46px;width:89px">266<i>,</i>107</div><div class="cell" style="left:215px;top:46px;width:89px">399</div><div class="cell" style="left:305px;top:46px;width:89px">5<i>.</i>425</div><div class="cell" style="left:395px;top:46px;width:89px">0<i>.</i>368</div><div class="cell" style="left:0;top:61px;width:24px;padding-right:2px">4</div><div class="cell" style="left:125px;top:61px;width:89px">179<i>,</i>379</div><div class="cell" style="left:215px;top:61px;width:89px">269</div><div class="cell" style="left:305px;top:61px;width:89px">5<i>.</i>254</div><div class="cell" style="left:395px;top:61px;width:89px">0<i>.</i>442</div><div class="cell" style="left:0;top:76px;width:24px;padding-right:2px">5</div><div class="cell" style="left:125px;top:76px;width:89px">111<i>,</i>379</div><div class="cell" style="left:215px;top:76px;width:89px">167</div><div class="cell" style="left:305px;top:76px;width:89px">5<i>.</i>047</div><div class="cell" style="left:395px;top:76px;width:89px">0<i>.</i>533</div><div class="cell" style="left:0;top:91px;width:24px;padding-right:2px">6</div><div class="cell" style="left:125px;top:91px;width:89px">100<i>,</i>921</div><div class="cell" style="left:215px;top:91px;width:89px">151</div><div class="cell" style="left:305px;top:91px;width:89px">5<i>.</i>004</div><div class="cell" style="left:395px;top:91px;width:89px">0<i>.</i>551</div><div class="cell" style="left:0;top:106px;width:24px;padding-right:2px">7</div><div class="cell" style="left:125px;top:106px;width:89px">63<i>,</i>702</div><div class="cell" style="left:215px;top:106px;width:89px">95</div><div class="cell" style="left:305px;top:106px;width:89px">4<i>.</i>804</div><div class="cell" style="left:395px;top:106px;width:89px">0<i>.</i>639</div><div class="cell" style="left:0;top:121px;width:24px;padding-right:2px">8</div><div class="cell" style="left:125px;top:121px;width:89px">605<i>,</i>201</div><div class="cell" style="left:215px;top:121px;width:89px">907</div><div class="cell" style="left:305px;top:121px;width:89px">5<i>.</i>782</div><div class="cell" style="left:395px;top:121px;width:89px">0<i>.</i>212</div><div class="cell" style="left:0;top:136px;width:24px;padding-right:2px">9</div><div class="cell" style="left:125px;top:136px;width:89px">407<i>,</i>957</div><div class="cell" style="left:215px;top:136px;width:89px">611</div><div class="cell" style="left:305px;top:136px;width:89px">5<i>.</i>611</div><div class="cell" style="left:395px;top:136px;width:89px">0<i>.</i>287</div><div class="cell" style="left:0;top:151px;width:24px;padding-right:2px">10</div><div class="cell" style="left:125px;top:151px;width:89px">318<i>,</i>832</div><div class="cell" style="left:215px;top:151px;width:89px">478</div><div class="cell" style="left:305px;top:151px;width:89px">5<i>.</i>504</div><div class="cell" style="left:395px;top:151px;width:89px">0<i>.</i>333</div><div class="cell" style="left:0;top:166px;width:24px;padding-right:2px">11</div><div class="cell" style="left:125px;top:166px;width:89px">274<i>,</i>099</div><div class="cell" style="left:215px;top:166px;width:89px">412</div><div class="cell" style="left:305px;top:166px;width:89px">5<i>.</i>438</div><div class="cell" style="left:395px;top:166px;width:89px">0<i>.</i>361</div></div><div class="a dith" style="left:990px;top:382px;width:18px;height:171px"></div><div class="rb1 a" style="left:990px;top:382px;width:18px;height:17px"><svg class="a" style="left:5px;top:6px" width="7" height="4"><path d="M0 4L3.500 0L7 4z"/></svg></div><div class="rb1 a" style="left:990px;top:399px;width:18px;height:19px"></div><div class="rb1 a" style="left:990px;top:536px;width:18px;height:17px"><svg class="a" style="left:5px;top:6px" width="7" height="4"><path d="M0 0h7L3.500 4z"/></svg></div><div class="btn" style="left:626px;top:563px;width:73px;height:35px"></div><svg class="bt" width="48" height="16" viewBox="0 0 48 16" role="img" aria-label="打印数据" style="fill:#000;position:absolute;left:638px;top:572px;"><title>打印数据</title><use href="#g6253" x="0"/><use href="#g5370" x="12"/><use href="#g6570" x="24"/><use href="#g636e" x="36"/></svg><div class="btn" style="left:704px;top:563px;width:73px;height:35px"></div><svg class="bt" width="48" height="16" viewBox="0 0 48 16" role="img" aria-label="保存数据" style="fill:#000;position:absolute;left:716px;top:572px;"><title>保存数据</title><use href="#g4fdd" x="0"/><use href="#g5b58" x="12"/><use href="#g6570" x="24"/><use href="#g636e" x="36"/></svg><div class="btn" style="left:782px;top:563px;width:73px;height:35px"></div><svg class="bt" width="48" height="16" viewBox="0 0 48 16" role="img" aria-label="表格输出" style="fill:#000;position:absolute;left:794px;top:572px;"><title>表格输出</title><use href="#g8868" x="0"/><use href="#g683c" x="12"/><use href="#g8f93" x="24"/><use href="#g51fa" x="36"/></svg><div class="a" style="left:860px;top:563px;width:73px;height:35px;background:#000"></div><div class="btn" style="left:861px;top:564px;width:71px;height:33px"></div><svg class="bt" width="48" height="16" viewBox="0 0 48 16" role="img" aria-label="作    图" style="fill:#000;position:absolute;left:872px;top:572px;"><title>作    图</title><use href="#g4f5c" x="0"/><use href="#g56fe" x="36"/></svg><div class="btn" style="left:938px;top:563px;width:73px;height:35px"></div><svg class="bt" width="48" height="16" viewBox="0 0 48 16" role="img" aria-label="关    闭" style="fill:#000;position:absolute;left:950px;top:572px;"><title>关    闭</title><use href="#g5173" x="0"/><use href="#g95ed" x="36"/></svg><div class="a" style="left:656px;top:653px;width:367px;height:89px;background:#c0c0c0;box-shadow:inset 1px 1px #dfdfdf,inset 2px 2px #fff,inset -1px -1px #000,inset -2px -2px #808080"></div><div class="a tb" style="left:659px;top:656px;width:361px;height:19px"></div><svg class="a" style="left:661px;top:657px" width="18" height="18" viewBox="0 0 18 18"><path d="M3.500 16.500L8 11.500" stroke="#000" stroke-width="1.800" stroke-dasharray="1 1"/><path d="M1.300 15.500L6.800 9.300" stroke="#fff" stroke-width="2.600" stroke-linecap="round"/><path d="M2.800 15.800L7.300 10.800" stroke="#d8d4f0" stroke-width="1"/><circle cx="10" cy="5.700" r="3.900" fill="#a8a8a8" stroke="#fff" stroke-width="2"/><circle cx="10.200" cy="6" r="2.200" fill="#b8b8b8" stroke="#000" stroke-width="1.100" stroke-dasharray="4.500 1.200"/><circle cx="10.200" cy="5.800" r=".7" fill="#000"/><path d="M13.500 1.200q3.200 1.600 2.600 7.500" stroke="#000" stroke-width="1.300" fill="none"/><path d="M8.300 12h4.700l1.200 1 2.400-2.400" stroke="#000" stroke-width="1" fill="none"/></svg><svg class="bt" width="36" height="16" viewBox="0 0 36 16" role="img" aria-label="工具箱" style="fill:#c8c8c8;position:absolute;left:679px;top:657px;"><title>工具箱</title><use href="#g5de5" x="0"/><use href="#g5177" x="12"/><use href="#g7bb1" x="24"/></svg><div class="btn" style="left:1001px;top:658px;width:16px;height:14px"><svg class="a" style="left:0;top:0" width="16" height="14"><path d="M4.0 3.5l7 6M11.0 3.5l-7 6" stroke="#000" stroke-width="1.500"/></svg></div><div class="a" style="left:659px;top:675px;width:360px;height:43px;background:#c0c0c0;box-shadow:inset 1px 1px #000,inset -1px 0 #404040"></div><div class="a" style="left:660px;top:676px;width:358px;height:2px;background:#fff"></div><div class="a" style="left:660px;top:715px;width:358px;height:2px;background:#808080"></div><div class="a" style="left:663px;top:679px;width:44px;height:36px;background:#c0c0c0;box-shadow:inset 1px 1px #fff,inset -1px -1px #808080"></div><svg class="a" style="left:663px;top:679px" width="44" height="36" viewBox="0 0 44 36"><path d="M14 26l1-3 8-8 2 2-8 8z" fill="#fff" stroke="#000" stroke-width="1"/><path d="M14.500 25.500l1-2.500 4-4 1.500 1.500-4 4z" fill="#20d0d0"/><path d="M22 14l3-3.500M24 16.500l3-3.500" stroke="#900020" stroke-width="1"/><circle cx="27.500" cy="11.500" r="3" fill="#a00020"/><path d="M21.500 13.500l5 5" stroke="#900020" stroke-width="2.200"/></svg><div class="a" style="left:707px;top:679px;width:44px;height:36px;background:#c0c0c0;box-shadow:inset 1px 1px #fff,inset -1px -1px #808080"></div><svg class="a" style="left:707px;top:679px" width="44" height="36" viewBox="0 0 44 36"><path d="M13 9.500h9M17.500 5v9" stroke="#2020d0" stroke-width="1.300"/><path d="M19.500 11.500v14l3.200-3.200 2.600 6 2.400-1-2.600-6h4.600z" fill="#fff" stroke="#000" stroke-width="1.100"/></svg><div class="a" style="left:751px;top:679px;width:44px;height:36px;background:#c0c0c0;box-shadow:inset 1px 1px #fff,inset -1px -1px #808080"></div><svg class="a" style="left:751px;top:679px" width="44" height="36" viewBox="0 0 44 36"><g font-family="Liberation Serif" font-weight="bold" font-size="12.500" letter-spacing=".8" stroke-width=".45"><text x="7.500" y="15.800"><tspan fill="#0000c0" stroke="#0000c0">0</tspan><tspan fill="#e00000" stroke="#e00000">1</tspan><tspan fill="#0000c0" stroke="#0000c0">0</tspan><tspan fill="#e00000" stroke="#e00000">1</tspan></text><text x="7.500" y="27.800"><tspan fill="#e00000" stroke="#e00000">1</tspan><tspan fill="#0000c0" stroke="#0000c0">0</tspan><tspan fill="#e00000" stroke="#e00000">1</tspan><tspan fill="#0000c0" stroke="#0000c0">0</tspan></text></g></svg><div class="a" style="left:795px;top:679px;width:44px;height:36px;background:#c0c0c0;box-shadow:inset 1px 1px #fff,inset -1px -1px #808080"></div><svg class="a" style="left:795px;top:679px" width="44" height="36" viewBox="0 0 44 36"><path d="M9.500 8v17.500h25" stroke="#000" stroke-width="1" fill="none"/><path d="M8.500 9.500h2M33 24.500v2" stroke="#000" stroke-width="1" fill="none"/><path d="M11.500 25C14 22 15 12.500 17 12.500S20.500 22.500 23.400 22.500S26.500 16 27.700 16S30 24 31.500 25" stroke="#1010d0" stroke-width="1.200" fill="none"/></svg><div class="a" style="left:839px;top:679px;width:44px;height:36px;background:#c0c0c0;box-shadow:inset 1px 1px #fff,inset -1px -1px #808080"></div><svg class="a" style="left:839px;top:679px" width="44" height="36" viewBox="0 0 44 36"><path d="M11.500 25C14 22 15 12.500 17 12.500S20.500 22.500 23.400 22.500S26.500 16 27.700 16S30 24 31.500 25z" fill="#f8e040"/><path d="M14 25c3-3 5-7 7-7s4 5 9 7z" fill="#b0b0e8"/><path d="M9.500 8v17.500h25" stroke="#000" stroke-width="1" fill="none"/><path d="M8.500 9.500h2M33 24.500v2" stroke="#000" stroke-width="1" fill="none"/><path d="M11.500 25C14 22 15 12.500 17 12.500S20.500 22.500 23.400 22.500S26.500 16 27.700 16S30 24 31.500 25" stroke="#e02010" stroke-width="1.200" fill="none"/></svg><div class="a" style="left:883px;top:679px;width:44px;height:36px;background:#c0c0c0;box-shadow:inset 1px 1px #fff,inset -1px -1px #808080"></div><svg class="a" style="left:883px;top:679px" width="44" height="36" viewBox="0 0 44 36"><path d="M18.500 8h5v10.500a6 6 0 1 1-5 0z" fill="#10e010" stroke="#000" stroke-width="1.200"/><rect x="19.200" y="8.600" width="3.600" height="4" fill="#fff"/><path d="M17.500 7.500h7" stroke="#000" stroke-width="1.200"/><path d="M21 14h2M21 16h2M21 18h2" stroke="#006000" stroke-width=".8"/></svg><div class="a" style="left:927px;top:679px;width:44px;height:36px;background:#c0c0c0;border:1px solid #000;box-shadow:inset 1px 1px #808080"></div><svg class="a" style="left:927px;top:679px" width="44" height="36" viewBox="0 0 44 36"><path d="M16 15l12.500-3.500M16 15l9 9" stroke="#000" stroke-width="1.100"/><circle cx="16" cy="15" r="3.600" fill="#f01010"/><circle cx="28.500" cy="11.500" r="2.900" fill="#f01010"/><circle cx="25" cy="24" r="3.100" fill="#f01010"/><circle cx="15" cy="14" r="1" fill="#ff9090"/><circle cx="27.800" cy="10.800" r=".8" fill="#ff9090"/><circle cx="24.300" cy="23.200" r=".8" fill="#ff9090"/></svg><div class="a" style="left:971px;top:679px;width:44px;height:36px;background:#c0c0c0;box-shadow:inset 1px 1px #fff,inset -1px -1px #808080"></div><svg class="a" style="left:971px;top:679px" width="44" height="36" viewBox="0 0 44 36"><rect x="7" y="7" width="11" height="22" fill="#f01010"/><rect x="25" y="7" width="11" height="22" fill="#1010e0"/><path d="M9 10h7M9 15h7M9 25h7M27 10h7M27 20h7M27 25h7" stroke="#fff" stroke-width="1.200"/><path d="M18 10h7M18 15h7M18 20h7M18 25h7" stroke="#000" stroke-width="1.100"/><path d="M20.500 9v2M20.500 14v2M20.500 19v2M20.500 24v2M23 9v2M23 14v2M23 19v2M23 24v2" stroke="#000" stroke-width=".9"/></svg><svg class="a" style="left:656px;top:716px" width="368" height="26" viewBox="656 716 368 26"><path d="M659.500 718.500H1019" stroke="#000" stroke-width="1"/><path d="M660.5 718.500V735.5l3 3H727.5l3-3V718.500" fill="#c0c0c0" stroke="#000" stroke-width="1"/><path d="M661.5 719.500V735" stroke="#fff" stroke-width="1" fill="none"/><path d="M662 736l2.500 1.500H726.5l2.500-2.500V720" stroke="#808080" stroke-width="1" fill="none"/><path d="M731.5 718.500V735.5l3 3H800.5l3-3V718.500" fill="#c0c0c0" stroke="#000" stroke-width="1"/><path d="M732.5 719.500V735" stroke="#fff" stroke-width="1" fill="none"/><path d="M733 736l2.500 1.500H799.5l2.500-2.500V720" stroke="#808080" stroke-width="1" fill="none"/><path d="M804.5 718.500V735.5l3 3H872.5l3-3V718.500" fill="#c0c0c0" stroke="#000" stroke-width="1"/><path d="M805.5 719.500V735" stroke="#fff" stroke-width="1" fill="none"/><path d="M806 736l2.500 1.500H871.5l2.500-2.500V720" stroke="#808080" stroke-width="1" fill="none"/><path d="M876.5 716V736.5l3 3H943.5l3-3V716" fill="#c0c0c0" stroke="none"/><path d="M877.5 718V736.5" stroke="#fff" stroke-width="1" fill="none"/><path d="M877.5 736.500l3 3H943.5l3-3V718" stroke="#808080" stroke-width="1.600" fill="none"/><path d="M948.5 718.500V735.5l3 3H1015.5l3-3V718.500" fill="#c0c0c0" stroke="#000" stroke-width="1"/><path d="M949.5 719.500V735" stroke="#fff" stroke-width="1" fill="none"/><path d="M950 736l2.500 1.500H1014.5l2.500-2.500V720" stroke="#808080" stroke-width="1" fill="none"/></svg><span class="a tab" style="left:660px;top:722px;width:71px;text-align:center;font-size:12px;line-height:14px;transform:scaleX(.86);">System</span><span class="a tab" style="left:731px;top:722px;width:73px;text-align:center;font-size:12px;line-height:14px;transform:scaleX(.86);">Import</span><span class="a tab" style="left:804px;top:722px;width:72px;text-align:center;font-size:12px;line-height:14px;transform:scaleX(.86);">Image</span><span class="a tab" style="left:876px;top:722px;width:72px;text-align:center;font-size:12px;line-height:14px;transform:scaleX(.86);font-weight:bold;">Analysis</span><span class="a tab" style="left:948px;top:722px;width:71px;text-align:center;font-size:12px;line-height:14px;transform:scaleX(.86);">Tools</span><div class="a" style="left:68px;top:417px;width:2px;height:326px;background:linear-gradient(90deg,#6452be 75%,#b0a8e0)"></div><div class="a" style="left:68px;top:415px;width:2px;height:2px;background:#101030"></div><svg class="a" style="left:503px;top:402px" width="13" height="21" viewBox="0 0 13 21"><path d="M.5.700V16.500L4 13l3 7 2.300-1-3-6.800H11.500z" fill="#fff" stroke="#000" stroke-width="1"/></svg><div class="a" style="left:0;top:766px;width:1024px;height:2px;background:#f8f8f8"></div></div></body></html>
